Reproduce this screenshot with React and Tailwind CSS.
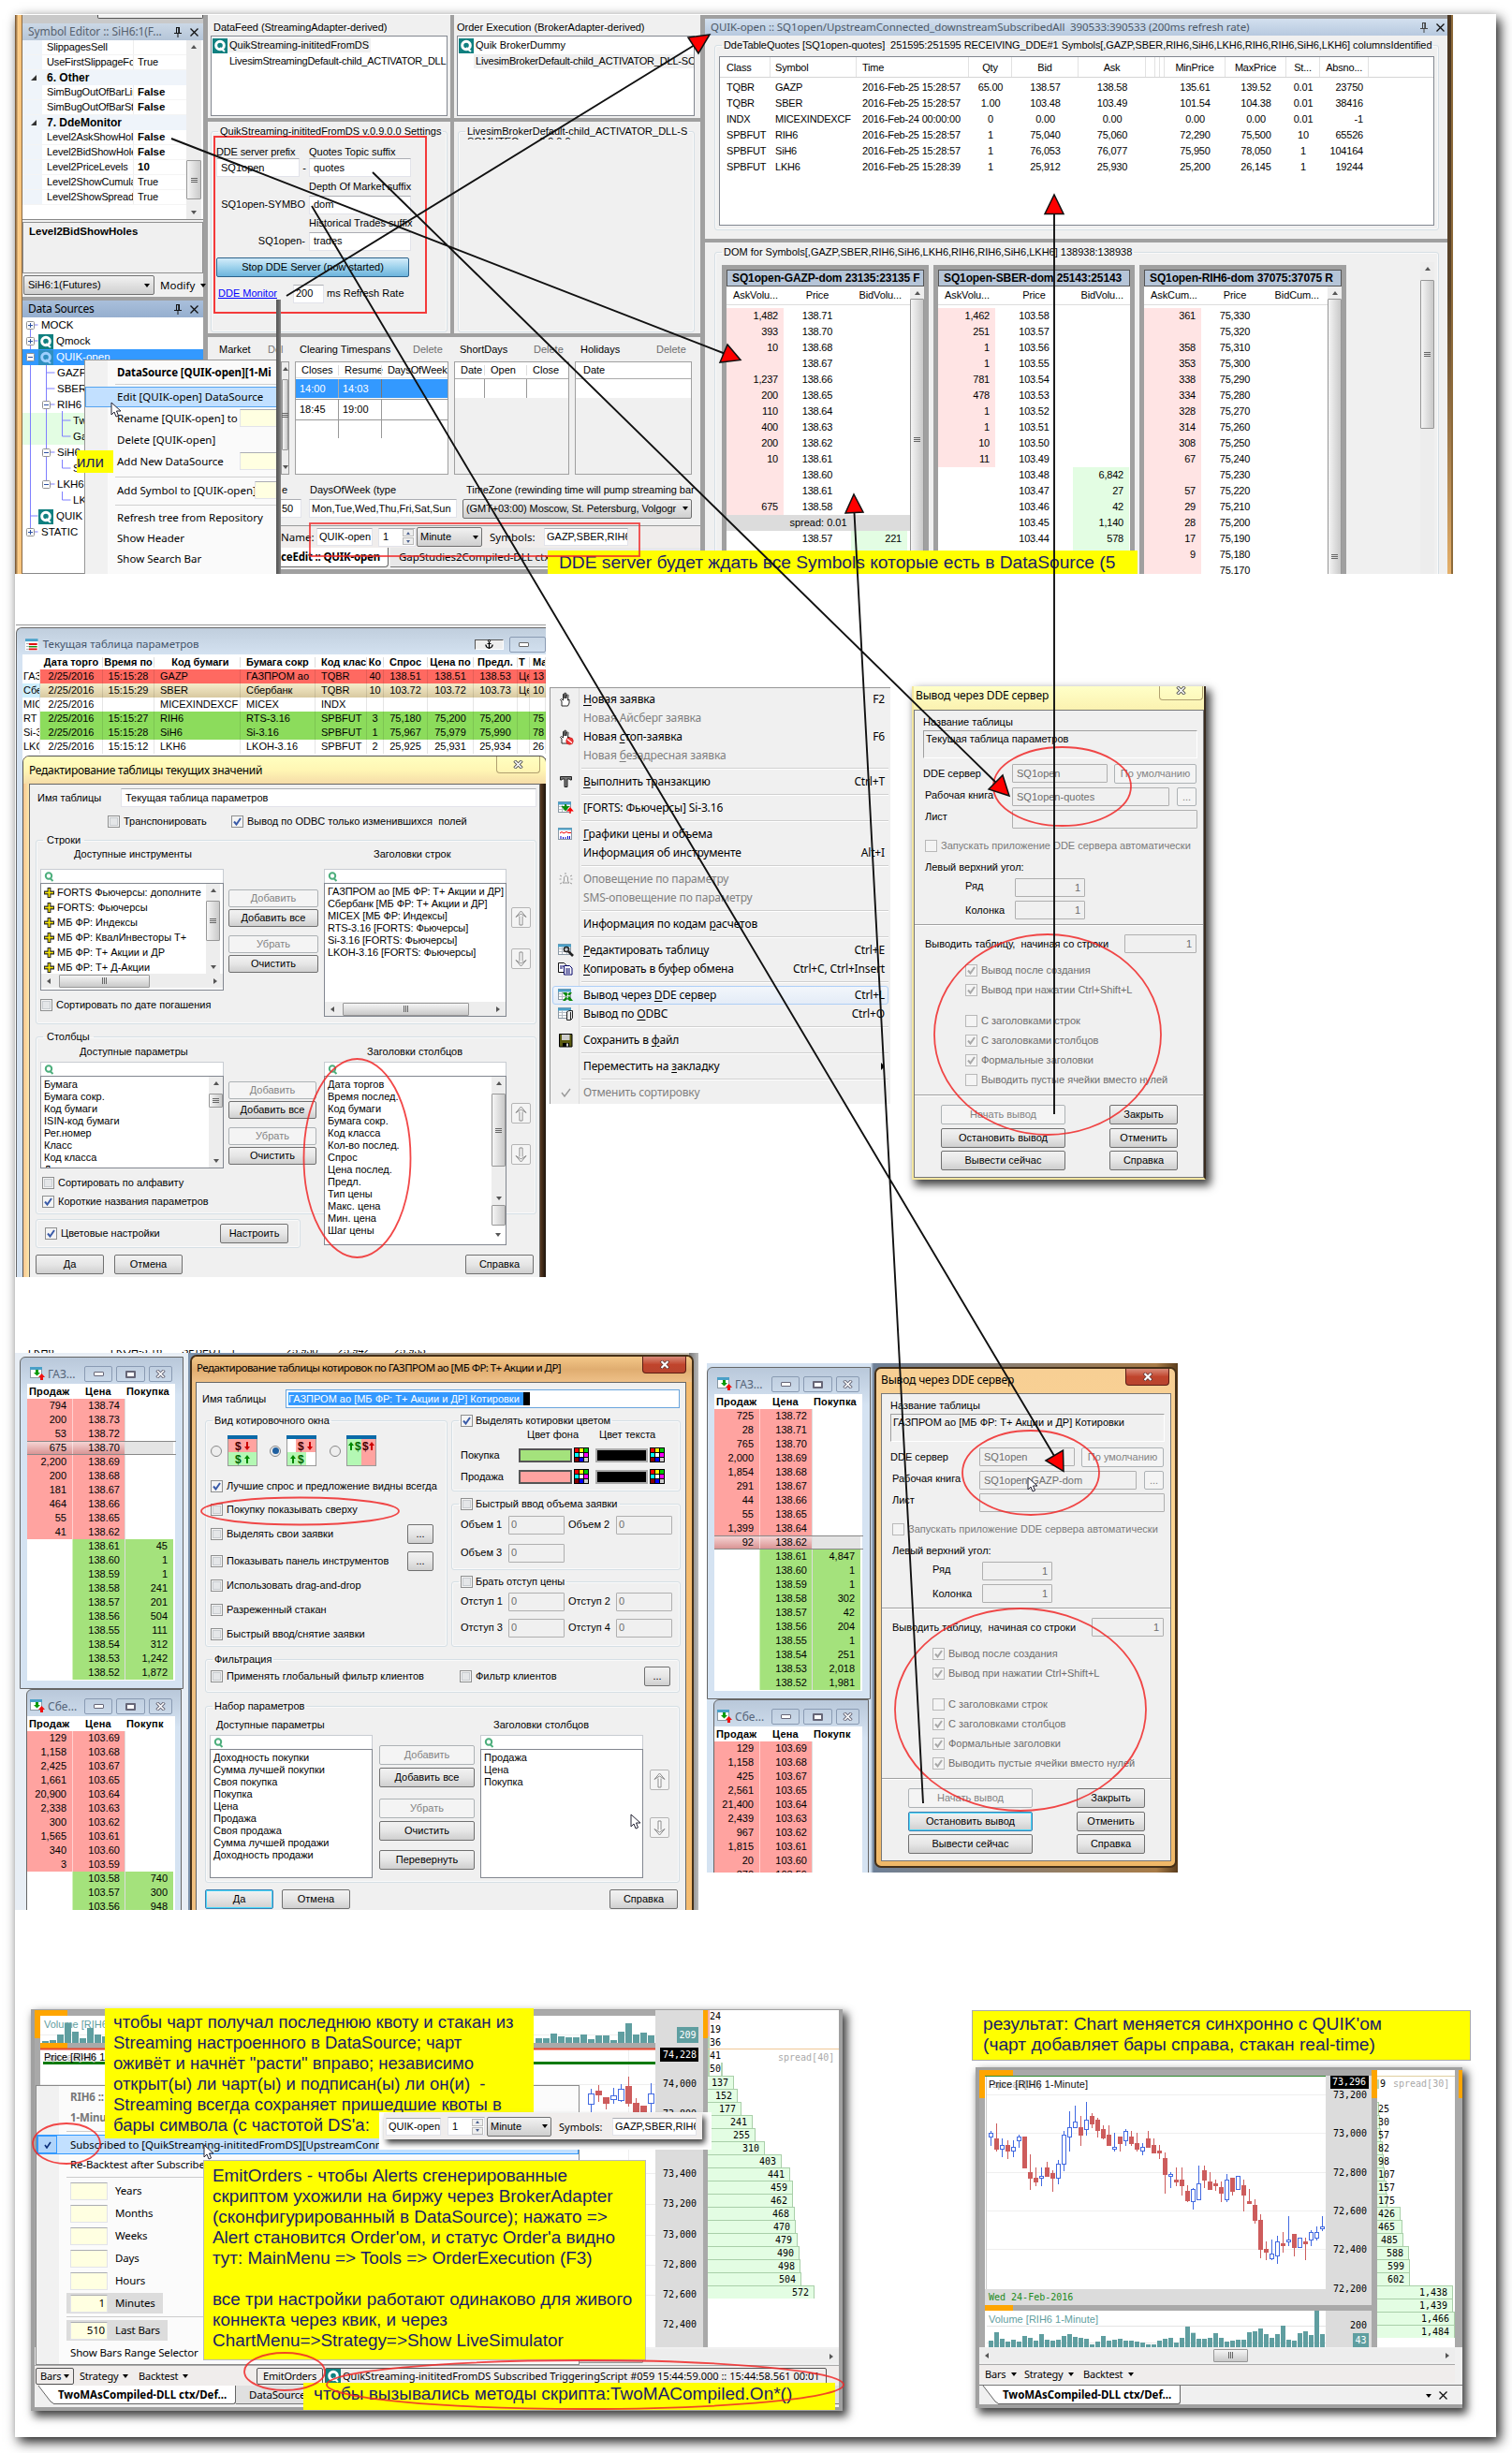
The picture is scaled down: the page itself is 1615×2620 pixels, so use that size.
import React from "react";

const SANS = "font-['Liberation_Sans',Arial,sans-serif]";
const UI = "font-['Noto_Sans','Open_Sans',sans-serif]";
const MONO = "font-['DejaVu_Sans_Mono','Liberation_Mono',monospace]";

/* ---------- small controls ---------- */

const Pin = ({ c = "#111" }) => (
  <svg width="8" height="11" viewBox="0 0 8 11" className="shrink-0">
    <path d="M2 0.5h4M2.5 0v6M5.5 0v6M4.8 0v6M0 6.5h8M4 7v4" stroke={c} fill="none" />
  </svg>
);
const Close = () => (
  <svg width="9" height="9" viewBox="0 0 9 9" className="shrink-0">
    <path d="M0.5 0.5l8 8M8.5 0.5l-8 8" stroke="#111" strokeWidth="1.3" fill="none" />
  </svg>
);
const Quik = ({ dim }) => (
  <svg width="16" height="16" viewBox="0 0 16 16" className="shrink-0">
    <rect width="16" height="16" fill={dim ? "#2f8fc0" : "#108080"} />
    <circle cx="8" cy="7.5" r="4.3" fill="none" stroke={dim ? "#9fd0ff" : "#fff"} strokeWidth="3" />
    <path d="M8 10l5 4" stroke={dim ? "#9fd0ff" : "#fff"} strokeWidth="2" />
  </svg>
);
const Cursor = () => (
  <svg width="12" height="18" viewBox="0 0 12 18">
    <path d="M1 1v13l3-3 2 5 2.5-1-2-5H11z" fill="#fff" stroke="#223" />
  </svg>
);
const Caret = ({ className = "" }) => (
  <span className={`inline-block size-0 shrink-0 border-x-[3.5px] border-t-[4px] border-x-transparent border-t-black ${className}`} />
);
const Cb = ({ on, dis, className = "" }) => (
  <span
    className={`flex size-[13px] shrink-0 items-center justify-center border bg-[#f4f4f4] ${dis ? "border-[#b8b8b8]" : "border-[#8e8f8f]"} ${className}`}
  >
    {!dis && !on && <span className="size-[9px] border border-[#c8ccd0] bg-[#e4e6e8]" />}
    {on ? (
      <svg width="9" height="9" viewBox="0 0 9 9">
        <path d="M1 4.5l2.5 3L8 1" fill="none" stroke={dis ? "#a8a8a8" : "#3a5ba8"} strokeWidth="2" />
      </svg>
    ) : null}
  </span>
);
const Btn = ({ className = "", dis, blue, children }) => (
  <span
    className={`flex shrink-0 items-center justify-center rounded-[2px] border ${
      dis
        ? "border-[#adb2b5] bg-[#f4f4f4] text-[#838383]"
        : blue
          ? "border-[#3c7fb1] bg-linear-to-b from-[#f2f2f2] via-[#e4e4e4] to-[#cfcfcf] shadow-[inset_0_0_0_1px_#46d8fb]"
          : "border-[#707070] bg-linear-to-b from-[#f2f2f2] via-[#e6e6e6] to-[#cfcfcf]"
    } ${className}`}
  >
    {children}
  </span>
);
const Inp = ({ className = "", dis, children }) => (
  <span
    className={`flex shrink-0 items-center overflow-hidden border px-1 ${
      dis ? "rounded-[1px] border-[#afafaf] bg-[#f0f0f0] text-[#6d6d6d]" : "border-[#e2e3ea] border-t-[#abadb3] bg-white"
    } ${className}`}
  >
    {children}
  </span>
);
const Combo = ({ className = "", children }) => (
  <span
    className={`flex shrink-0 items-center justify-between overflow-hidden rounded-[2px] border border-[#707070] bg-linear-to-b from-[#f2f2f2] to-[#cfcfcf] px-1 ${className}`}
  >
    {children}
    <Caret />
  </span>
);
const Group = ({ className = "", label, children }) => (
  <fieldset className={`min-w-0 rounded-[3px] border border-[#d5dfe5] shadow-[inset_0_0_0_1px_#fafafa] ${className}`}>
    {label && <legend className="ml-[7px] h-3 px-[2px] leading-3">{label}</legend>}
    {children}
  </fieldset>
);
const VScroll = ({ className = "", thumb = "mt-1 h-5" }) => (
  <span className={`flex shrink-0 flex-col items-center bg-[#ededed] ${className}`}>
    <span className="mt-[5px] size-0 shrink-0 border-x-[3px] border-b-[4px] border-x-transparent border-b-[#555]" />
    <span className={`flex w-full shrink-0 flex-col items-center justify-center gap-px rounded-[1px] border border-[#979797] bg-linear-to-r from-[#f5f5f5] to-[#c9c9c9] ${thumb}`}>
      <i className="block h-px w-[7px] bg-[#666]" />
      <i className="block h-px w-[7px] bg-[#666]" />
      <i className="block h-px w-[7px] bg-[#666]" />
    </span>
    <span className="mt-auto mb-[5px] size-0 shrink-0 border-x-[3px] border-t-[4px] border-x-transparent border-t-[#555]" />
  </span>
);
const HScroll = ({ className = "", thumb = "ml-2 w-20" }) => (
  <span className={`flex h-[15px] shrink-0 items-center bg-[#ededed] ${className}`}>
    <span className="ml-[6px] size-0 shrink-0 border-y-[3px] border-r-[4px] border-y-transparent border-r-[#555]" />
    <span className={`flex h-[14px] shrink-0 items-center justify-center gap-px rounded-[1px] border border-[#979797] bg-linear-to-b from-[#f5f5f5] to-[#c9c9c9] ${thumb}`}>
      <i className="block h-[7px] w-px bg-[#666]" />
      <i className="block h-[7px] w-px bg-[#666]" />
      <i className="block h-[7px] w-px bg-[#666]" />
    </span>
    <span className="mr-[6px] ml-auto size-0 shrink-0 border-y-[3px] border-l-[4px] border-y-transparent border-l-[#555]" />
  </span>
);
const Search = ({ className = "" }) => (
  <span className={`flex h-[15px] shrink-0 items-center border border-b-0 border-[#c8ccd2] bg-white pl-[3px] ${className}`}>
    <svg width="11" height="11" viewBox="0 0 11 11">
      <circle cx="5" cy="4.5" r="3.2" fill="none" stroke="#4cae7c" strokeWidth="2" />
      <path d="M6.5 7l3 3" stroke="#4cae7c" strokeWidth="2" />
    </svg>
  </span>
);
const ArrowBtn = ({ down, className = "" }) => (
  <span className={`flex h-[22px] w-[21px] shrink-0 items-center justify-center rounded-[2px] border border-[#b4b4b4] bg-[#f4f4f4] ${className}`}>
    <svg width="13" height="17" viewBox="0 0 13 17" className={down ? "rotate-180" : ""}>
      <path d="M5 6.500V16H8V6.500M1 7.500L6.500 1L12 7.500L6.500 4Z" fill="#fff" stroke="#8a8a8a" />
    </svg>
  </span>
);
const Spin = ({ className = "" }) => (
  <Inp className={`justify-between !pr-px ${className}`}>
    1
    <span className="flex flex-col gap-px">
      <i className="flex h-2 w-[12px] items-center justify-center border border-[#bbb] bg-[#eee]">
        <b className="size-0 border-x-[2.5px] border-b-[3px] border-x-transparent border-b-[#4a5f8f]" />
      </i>
      <i className="flex h-2 w-[12px] items-center justify-center border border-[#bbb] bg-[#eee]">
        <b className="size-0 border-x-[2.5px] border-t-[3px] border-x-transparent border-t-[#4a5f8f]" />
      </i>
    </span>
  </Inp>
);

/* ---------- top window ---------- */

const PROPS = [
  ["SlippagesSell", "", 0],
  ["UseFirstSlippageFor", "True", 0],
  ["6. Other", "", 2],
  ["SimBugOutOfBarLim", "False", 1],
  ["SimBugOutOfBarSto", "False", 1],
  ["7. DdeMonitor", "", 2],
  ["Level2AskShowHol", "False", 1],
  ["Level2BidShowHole", "False", 1],
  ["Level2PriceLevels", "10", 1],
  ["Level2ShowCumula", "True", 0],
  ["Level2ShowSpread", "True", 0],
];

const Exp = ({ minus, className = "" }) => (
  <svg width="9" height="9" viewBox="0 0 9 9" className={`shrink-0 ${className}`}>
    <rect x="0.5" y="0.5" width="8" height="8" rx="1" fill="#fff" stroke="#919191" />
    <path d={minus ? "M2 4.500h5" : "M2 4.500h5M4.500 2v5"} stroke="#2b4fa0" />
  </svg>
);

function SideColumn() {
  return (
    <div className="flex w-[193px] shrink-0 flex-col bg-[#f0f0f0]">
      <div className="flex h-[9px] justify-end bg-[#c9c9c9]">
        <span className="h-1 w-[113px] rounded-b-[2px] border border-t-0 border-[#555] bg-[#f0f0f0]" />
      </div>
      <div className={`flex h-[18px] items-center bg-linear-to-b from-[#cbd8e6] to-[#b5c5d8] pl-1.5 text-[12px] tracking-[-0.1px] text-[#56616e] ${UI}`}>
        <span className="w-[156px]">Symbol Editor :: SiH6:1(F...</span>
        <Pin />
        <span className="w-[9px]" />
        <Close />
      </div>
      <div className="flex h-[192px] border-b border-[#888] bg-white">
        <div className="w-[175px]">
          {PROPS.map(([k, v, t], i) =>
            t === 2 ? (
              <div key={i} className="flex h-4 items-center bg-[#eff4fa] text-[12px] font-bold">
                <span className="ml-[9px] w-[17px]">
                  <svg width="6" height="6" viewBox="0 0 6 6"><path d="M6 0v6H0z" fill="#333" /></svg>
                </span>
                {k}
              </div>
            ) : (
              <div key={i} className="flex h-4 items-stretch border-b border-[#f4f4f4]">
                <span className="w-[21px] shrink-0 bg-[#eff4fa]" />
                <span className="flex w-[97px] shrink-0 items-center overflow-hidden pl-[5px]"><span className="w-[92px] overflow-hidden tracking-[-0.15px]">{k}</span></span>
                <span className={`flex items-center border-l border-[#eee] pl-1 ${t === 1 ? "text-[11.5px] font-bold" : ""}`}>{v}</span>
              </div>
            )
          )}
        </div>
        <VScroll className="w-[16px]" thumb="mt-[119px] h-[42px]" />
      </div>
      <div className="mt-[2px] h-[55px] border border-[#909090] px-1.5 pt-1 text-[11.5px] font-bold">Level2BidShowHoles</div>
      <div className="flex h-[25px] items-center bg-[#f0f0f0] pl-px">
        <Combo className="h-[21px] w-[140px]">SiH6:1(Futures)</Combo>
        <span className={`ml-1.5 text-[11.5px] ${UI}`}>Modify</span>
        <Caret className="ml-1.5" />
      </div>
      <div className="h-1 bg-[#a0a0a0]" />
      <div className={`flex h-[18px] items-center bg-linear-to-b from-[#a9bfdb] to-[#96afcf] pl-1.5 text-[12px] tracking-[-0.3px] ${UI}`}>
        <span className="w-[156px]">Data Sources</span>
        <Pin />
        <span className="w-[9px]" />
        <Close />
      </div>
      <div className="relative flex-1 overflow-hidden border-b border-[#888] bg-white text-[11.5px] *:relative">
        <svg width="193" height="260" viewBox="0 0 193 260" className="!absolute top-0 left-0">
          <rect x="0" y="102" width="193" height="34" fill="#e3fde3" />
          <path d="M8.500 8v222M8.500 8h8M8.500 25h8M8.500 42h8M8.500 212h8M8.500 229h8M25.500 50v128M25.500 59h9M25.500 76h9M25.500 93h9M25.500 144h9M25.500 178h9M42.500 100v27h9M42.500 110h9M42.500 152v9h9M42.500 186v9h9" stroke="#7f7fff" fill="none" />
        </svg>
        <div className="flex h-[17px] items-center"><Exp className="ml-1 mr-[7px]" />MOCK</div>
        <div className="flex h-[17px] items-center"><Exp className="mr-1 ml-1" /><Quik /><span className="ml-[3px]">Qmock</span></div>
        <div className="flex h-[17px] items-center bg-[#3399ff] text-white"><Exp minus className="mr-1 ml-1" /><Quik dim /><span className="ml-[3px]">QUIK-open</span></div>
        <div className="flex h-[17px] items-center pl-[37px]">GAZP</div>
        <div className="flex h-[17px] items-center pl-[37px]">SBER</div>
        <div className="flex h-[17px] items-center pl-[21px]"><Exp minus className="mr-[7px]" />RIH6</div>
        <div className="flex h-[17px] items-center pl-[54px]">Tw</div>
        <div className="flex h-[17px] items-center pl-[54px]">Ga</div>
        <div className="flex h-[17px] items-center pl-[21px]"><Exp minus className="mr-[7px]" />SiH6</div>
        <div className="flex h-[17px] items-center pl-[54px]">S</div>
        <div className="flex h-[17px] items-center pl-[21px]"><Exp minus className="mr-[7px]" />LKH6</div>
        <div className="flex h-[17px] items-center pl-[54px]">LK</div>
        <div className="flex h-[17px] items-center pl-[17px]"><Quik /><span className="ml-[3px]">QUIK</span></div>
        <div className="flex h-[17px] items-center"><Exp className="ml-1 mr-[7px]" />STATIC</div>
      </div>
    </div>
  );
}

function Adapters() {
  return (
    <>
      <div className="flex h-[110px] gap-1">
        <div className="w-[259px] bg-[#f0f0f0] pl-[3px]">
          <div className="flex h-[22px] items-center pt-1 pl-[3px] tracking-[-0.05px]">DataFeed (StreamingAdapter-derived)</div>
          <div className="h-[86px] w-[253px] overflow-hidden border border-[#828790] bg-white pt-px">
            <div className="flex h-[17px] items-center pl-px"><Quik /><span className="flex h-[15px] items-center bg-[#f0f0f0] px-[2px]">QuikStreaming-inititedFromDS</span></div>
            <div className="flex h-[17px] items-center pl-[19px] tracking-[-0.25px]">LivesimStreamingDefault-child_ACTIVATOR_DLL</div>
          </div>
        </div>
        <div className="w-[263px] bg-[#f0f0f0] pl-[3px]">
          <div className="flex h-[22px] items-center pt-1">Order Execution (BrokerAdapter-derived)</div>
          <div className="h-[86px] w-[254px] overflow-hidden border border-[#828790] bg-white pt-px">
            <div className="flex h-[17px] items-center pl-px"><Quik /><span className="pl-[2px]">Quik BrokerDummy</span></div>
            <div className="flex h-[17px] items-center pl-[17px]"><span className="flex h-[15px] items-center bg-[#f0f0f0] px-[2px] tracking-[-0.2px]">LivesimBrokerDefault-child_ACTIVATOR_DLL-SC</span></div>
          </div>
        </div>
      </div>
      <div className="mt-1 flex h-[226px] gap-1">
        <div className="w-[259px] bg-[#f0f0f0] pt-1 pl-[3px]">
          <Group className="h-[221px] w-[253px]" label="QuikStreaming-inititedFromDS v.0.9.0.0 Settings">
            <div className="-mt-px ml-[2px] h-[190px] w-[228px] border-2 border-[#f43a3a] pl-[1px]">
              <div className="flex h-[26px] items-center pt-1"><span className="w-[99px] tracking-[-0.15px]">DDE server prefix</span><span>Quotes Topic suffix</span></div>
              <div className="-mt-[4px] flex h-[20px] items-center"><Inp className="h-[20px] w-[89px]">SQ1open</Inp><span className="w-[10px] text-center">-</span><Inp className="h-[20px] w-[109px]">quotes</Inp></div>
              <div className="flex h-[20px] items-center pl-[99px]">Depth Of Market suffix</div>
              <div className="flex h-[19px] items-center"><span className="w-[99px] pr-1 text-right">SQ1open-SYMBO</span><Inp className="h-[20px] w-[109px]">dom</Inp></div>
              <div className="flex h-[20px] items-center pl-[99px]">Historical Trades suffix</div>
              <div className="flex h-[19px] items-center"><span className="w-[99px] pr-1 text-right">SQ1open-</span><Inp className="h-[20px] w-[109px]">trades</Inp></div>
              <div className="mt-[8px] flex h-[21px] w-[206px] items-center justify-center rounded-[2px] border border-[#2c628b] bg-linear-to-b from-[#d3ecfa] via-[#9dd2ec] to-[#6cb4dc]">Stop DDE Server (now started)</div>
              <div className="mt-[7px] flex h-[21px] items-center"><span className="w-[82px] pl-[2px] text-[#0000ff] underline">DDE Monitor</span><Inp className="mr-[3px] h-[20px] w-[33px] !px-[2px]">200</Inp>ms Refresh Rate</div>
            </div>
          </Group>
        </div>
        <div className="w-[263px] bg-[#f0f0f0] pt-1 pl-1">
          <Group className="h-[221px] w-[253px]" label="LivesimBrokerDefault-child_ACTIVATOR_DLL-S">
            <div className="-mt-px ml-[9px] h-1 overflow-hidden leading-3">SQMUTEC - ..  0.9.0.0</div>
          </Group>
        </div>
      </div>
    </>
  );
}

function Calendars() {
  return (
    <div className="mt-1 flex h-[248px] flex-col overflow-hidden bg-[#f0f0f0]">
      <div className="flex h-[26px] items-center pl-[12px]">
        <span className="w-[52px]">Market</span><span className="w-[34px] text-[#777]">Del</span>
        <span className="w-[121px]">Clearing Timespans</span><span className="w-[50px] text-[#6d6d6d]">Delete</span>
        <span className="w-[79px]">ShortDays</span><span className="w-[50px] text-[#6d6d6d]">Delete</span>
        <span className="w-[81px]">Holidays</span><span className="text-[#6d6d6d]">Delete</span>
      </div>
      <div className="flex h-[121px] pl-[78px]">
        <VScroll className="w-[9px] border border-[#999]" thumb="mt-[9px] h-[76px]" />
        <div className="ml-[6px] flex w-[164px] flex-col border border-[#a0a0a0] bg-white">
          <div className="flex h-[17px] items-center border-b border-[#ddd]"><span className="w-[45px] pl-1.5">Closes</span><span className="w-[46px] border-l border-[#ddd] pl-1.5">Resume</span><span className="border-l border-[#ddd] pl-1.5 tracking-[-0.1px]">DaysOfWeek</span></div>
          <div className="mt-px flex h-[20px] items-center gap-px bg-[#3399ff] text-white"><span className="w-[44px] pl-[4px]">14:00</span><span className="flex h-full w-[45px] items-center border-l border-[#aaa] pl-[4px]">14:03</span><span className="h-full border-l border-[#777]" /></div>
          <div className="mt-px flex h-[22px] items-center gap-px border-t border-[#999]"><span className="w-[44px] pl-[4px]">18:45</span><span className="flex h-full w-[45px] items-center border-l border-[#999] pl-[4px]">19:00</span><span className="h-full border-l border-[#999]" /></div>
          <div className="flex h-[20px] items-center gap-px border-t border-[#999]"><span className="w-[44px]" /><span className="h-full w-[45px] border-l border-[#999]" /><span className="h-full border-l border-[#999]" /></div>
        </div>
        <div className="ml-[6px] w-[123px] border border-[#a0a0a0]">
          <div className="flex h-[17px] items-center bg-white"><span className="w-[31px] pl-1.5">Date</span><span className="w-[45px] border-l border-[#ddd] pl-1.5">Open</span><span className="border-l border-[#ddd] pl-1.5">Close</span></div>
          <div className="flex h-[21px] border-t border-[#aaa] bg-white"><span className="w-[31px]" /><span className="w-[45px] border-l border-[#999]" /><span className="border-l border-[#999]" /></div>
        </div>
        <div className="ml-[6px] w-[125px] border border-[#a0a0a0]">
          <div className="flex h-[17px] items-center bg-white pl-2">Date</div>
          <div className="h-[21px] border-t border-[#aaa] bg-white" />
        </div>
      </div>
      <div className="mt-[7px] flex h-[18px] items-center pl-[79px]"><span className="w-[30px]">e</span><span className="w-[167px]">DaysOfWeek (type</span><span className="tracking-[-0.05px]">TimeZone (rewinding time will pump streaming bar</span></div>
      <div className="flex h-[22px] items-center pl-[74px]"><Inp className="h-[20px] w-[26px]">50</Inp><Inp className="ml-2 h-[20px] w-[158px] !px-[2px]">Mon,Tue,Wed,Thu,Fri,Sat,Sun</Inp><Combo className="ml-[6px] h-[21px] w-[245px] !px-[3px]"><span className="tracking-[-0.1px]">(GMT+03:00) Moscow, St. Petersburg, Volgogr</span></Combo></div>
      <div className="mt-[7px] flex h-[24px] items-center border-t border-[#999] bg-[#f0edec] pl-[78px]">
        <span className={`w-[38px] text-[11.5px] ${UI}`}>Name:</span>
        <Inp className="h-[19px] w-[60px] !px-[2px]">QUIK-open</Inp>
        <Spin className="ml-[6px] h-[20px] w-[40px]" />
        <Combo className="ml-[1px] h-[21px] w-[70px] !px-[3px]">Minute</Combo>
        <span className={`ml-2 w-[58px] text-[11.5px] ${UI}`}>Symbols:</span>
        <Inp className="h-[19px] w-[90px] !px-[2px]">GAZP,SBER,RIH6</Inp>
      </div>
      <div className={`flex h-[23px] items-start text-[11.5px] ${UI}`}>
        <div className="ml-[78px] flex h-[21px] w-[115px] items-center rounded-br-[4px] border-r border-b border-[#666] bg-white font-bold"><span className="w-[115px] tracking-[-0.2px]">ceEdit :: QUIK-open</span></div>
        <div className="ml-[2px] flex h-[21px] flex-1 items-center border-b border-[#777] bg-[#e8e8e8] pl-[9px] tracking-[-0.05px]">GapStudies2Compiled-DLL ctx</div>
      </div>
    </div>
  );
}

const QCOLS = [
  "w-[54px] pl-[7px]", "w-[92px] pl-[5px]", "w-[120px] pl-[6px]", "w-[46px] text-center", "w-[71px] text-center", "w-[72px] text-center",
  "w-[10px]", "w-[5px]", "w-[5px]", "w-[65px] text-center", "w-[65px] text-center", "w-[36px] text-center", "w-[52px] pr-[6px] text-right",
];
const QROWS = [
  ["TQBR", "GAZP", "2016-Feb-25 15:28:57", "65.00", "138.57", "138.58", "", "", "", "135.61", "139.52", "0.01", "23750"],
  ["TQBR", "SBER", "2016-Feb-25 15:28:57", "1.00", "103.48", "103.49", "", "", "", "101.54", "104.38", "0.01", "38416"],
  ["INDX", "MICEXINDEXCF", "2016-Feb-24 00:00:00", "0", "0.00", "0.00", "", "", "", "0.00", "0.00", "0.01", "-1"],
  ["SPBFUT", "RIH6", "2016-Feb-25 15:28:57", "1", "75,040", "75,060", "", "", "", "72,290", "75,500", "10", "65526"],
  ["SPBFUT", "SiH6", "2016-Feb-25 15:28:57", "1", "76,053", "76,077", "", "", "", "75,950", "78,050", "1", "104164"],
  ["SPBFUT", "LKH6", "2016-Feb-25 15:28:39", "1", "25,912", "25,930", "", "", "", "25,200", "26,145", "1", "19244"],
];
const D1 = [["1,482", "138.71"], ["393", "138.70"], ["10", "138.68"], ["", "138.67"], ["1,237", "138.66"], ["200", "138.65"], ["110", "138.64"], ["400", "138.63"], ["200", "138.62"], ["10", "138.61"], ["", "138.60"], ["", "138.61"], ["675", "138.58"], null, ["", "138.57", "221"], ["", "", " "]];
const D2 = [["1,462", "103.58"], ["251", "103.57"], ["1", "103.56"], ["1", "103.55"], ["781", "103.54"], ["478", "103.53"], ["1", "103.52"], ["1", "103.51"], ["10", "103.50"], ["11", "103.49"], ["", "103.48", "6,842"], ["", "103.47", "27"], ["", "103.46", "42"], ["", "103.45", "1,140"], ["", "103.44", "578"], ["", "", " "]];
const D3 = [["361", "75,330"], ["", "75,320"], ["358", "75,310"], ["353", "75,300"], ["338", "75,290"], ["334", "75,280"], ["328", "75,270"], ["314", "75,260"], ["308", "75,250"], ["67", "75,240"], ["", "75,230"], ["57", "75,220"], ["29", "75,210"], ["28", "75,200"], ["17", "75,190"], ["9", "75,180"], ["", "75,170"]];

function Dom({ title, rows, heads, price, bid, scroll, className }) {
  return (
    <div className={`shrink-0 border-[5px] border-b-0 border-[#a0a0a0] bg-white ${className}`}>
      <div className="flex h-[18px] items-center overflow-hidden border border-[#555] bg-[#b6c5d8] pl-[5px] text-[12px] font-bold tracking-[-0.12px]">{title}</div>
      <div className="flex h-[400px]">
        <div className="flex-1">
          <div className="mb-[3px] flex h-[20px] items-center border-b border-[#ddd] tracking-[-0.1px]">
            <span className="w-[61px] pl-[7px]">{heads[0]}</span><span className={`text-center ${price}`}>Price</span><span className={`text-right ${bid}`}>{heads[1]}</span>
          </div>
          {rows.map((r, i) =>
            r === null ? (
              <div key={i} className="flex h-[17px] items-center justify-center bg-[#dcdcdc]">spread: 0.01</div>
            ) : (
              <div key={i} className="flex h-[17px] items-stretch tracking-[-0.2px]">
                <span className={`flex w-[61px] items-center justify-end pr-[6px] ${r[2] ? "" : "bg-[#ffe4e4]"}`}>{r[0]}</span>
                <span className={`flex items-center justify-center ${price}`}>{r[1]}</span>
                <span className={`flex items-center justify-end ${bid} ${r[2] ? "bg-[#e3fde3]" : ""}`}>{r[2]}</span>
              </div>
            )
          )}
        </div>
        {scroll && <VScroll className="w-[15px]" thumb={scroll} />}
      </div>
    </div>
  );
}

function MonitorColumn() {
  return (
    <div className="w-[793px] shrink-0 bg-[#f0f0f0]">
      <div className="h-1 bg-[#a0a0a0]" />
      <div className={`flex h-[18px] items-center bg-linear-to-b from-[#d3e0ef] to-[#b7c9df] pl-[6px] text-[11.5px] text-[#4c5866] ${UI}`}>
        <span className="w-[758px] tracking-[-0.08px]">QUIK-open :: SQ1open/UpstreamConnected_downstreamSubscribedAll  390533:390533 (200ms refresh rate)</span>
        <Pin c="#444" />
        <span className="w-[9px]" />
        <Close />
      </div>
      <div className="h-[217px] px-[10px] pt-[4px]">
        <Group className="h-[204px] w-[774px]" label={<span className="tracking-[-0.07px]">DdeTableQuotes [SQ1open-quotes]  251595:251595 RECEIVING_DDE#1 Symbols[,GAZP,SBER,RIH6,SiH6,LKH6,RIH6,RIH6,SiH6,LKH6] columnsIdentified</span>}>
          <div className="mt-[6px] ml-[4px] h-[181px] w-[764px] border border-[#828790] bg-white tracking-[-0.2px]">
            <div className="mb-[2px] flex h-[22px] items-stretch border-b border-[#d5d5d5] leading-[22px]">
              {["Class", "Symbol", "Time", "Qty", "Bid", "Ask", "", "", "", "MinPrice", "MaxPrice", "St...", "Absno..."].map((h, i) => (
                <span key={i} className={`border-r border-[#e2e2e2] ${QCOLS[i]}`}>{h}</span>
              ))}
            </div>
            {QROWS.map((r, j) => (
              <div key={j} className="flex h-[17px] items-center">
                {r.map((c, i) => (<span key={i} className={QCOLS[i]}>{c}</span>))}
              </div>
            ))}
          </div>
        </Group>
      </div>
      <div className="h-1 bg-[#a0a0a0]" />
      <div className="h-[354px] overflow-hidden px-[10px] pt-[4px]">
        <Group className="h-[400px] w-[774px]" label="DOM for Symbols[,GAZP,SBER,RIH6,SiH6,LKH6,RIH6,RIH6,SiH6,LKH6] 138938:138938">
          <div className="mt-[8px] flex items-start pl-[7px]">
            <Dom className="w-[221px]" title="SQ1open-GAZP-dom 23135:23135 F" rows={D1} heads={["AskVolu...", "BidVolu..."]} price="w-[72px]" bid="w-[60px] pr-[6px]" scroll="mt-[4px] h-[300px]" />
            <Dom className="ml-[5px] w-[215px]" title="SQ1open-SBER-dom 25143:25143" rows={D2} heads={["AskVolu...", "BidVolu..."]} price="w-[83px]" bid="w-[60px] pr-[6px]" />
            <Dom className="ml-[5px] w-[221px]" title="SQ1open-RIH6-dom 37075:37075 R" rows={D3} heads={["AskCum...", "BidCum..."]} price="w-[72px]" bid="w-[60px] pr-[6px]" scroll="mt-[4px] h-[550px]" />
            <VScroll className="-mt-[3px] ml-[79px] h-[400px] w-[15px]" thumb="mt-[10px] h-[159px]" />
          </div>
        </Group>
      </div>
    </div>
  );
}

const MenuSep = () => <div className="ml-[32px] h-px bg-[#d0d0d0]" />;

function TopWindow() {
  return (
    <>
      <div className={`absolute top-4 left-4 flex h-[597px] w-[1536px] overflow-hidden bg-[#a0a0a0] ${SANS}`}>
        <div className="w-2 shrink-0 border-r border-[#8a6a45] bg-linear-to-r from-[#6b4c2c] via-[#ffcf8a] to-[#f3bf78]" />
        <SideColumn />
        <div className="ml-[5px] w-[526px] shrink-0">
          <Adapters />
          <Calendars />
        </div>
        <div className="w-[5px] shrink-0" />
        <MonitorColumn />
        <div className="flex-1 border-r-2 border-[#8d6a3a] bg-linear-to-b from-[#4a3622] via-[#5b4429] to-[#e6b06a]" />
      </div>
      {/* popup of the data source tree */}
      <div className={`absolute top-[384px] left-[90px] h-[229px] w-[206px] overflow-hidden border-t border-l border-[#979797] bg-[linear-gradient(90deg,#f1f1f1_24px,#fafafa_24px)] text-[11.5px] ${UI}`}>
        <div className="flex h-[25px] items-center pl-[34px] font-bold tracking-[-0.1px]">DataSource [QUIK-open][1-Mi</div>
        <MenuSep />
        <div className="mt-[2px] flex h-[22px] items-center border border-[#55a4f0] bg-[#c2e0ff] pl-[33px]">Edit [QUIK-open] DataSource</div>
        <div className="flex h-[23px] items-center pl-[34px]"><span className="w-[147px]">Rename [QUIK-open] to</span><Inp className="h-[19px] w-[40px] !bg-[#ffffe1]" /></div>
        <div className="flex h-[23px] items-center pl-[34px]">Delete [QUIK-open]</div>
        <div className="flex h-[23px] items-center pl-[34px]"><span className="w-[147px]">Add New DataSource</span><Inp className="h-[19px] w-[40px] !bg-[#ffffe1]" /></div>
        <div className="mt-[5px]"><MenuSep /></div>
        <div className="mt-[2px] flex h-[23px] items-center pl-[34px]"><span className="w-[147px]">Add Symbol to [QUIK-open]</span><Inp className="h-[19px] w-[40px] !bg-[#ffffe1]" /></div>
        <div className="mt-[4px]"><MenuSep /></div>
        <div className="mt-[2px] flex h-[22px] items-center pl-[34px]">Refresh tree from Repository</div>
        <div className="flex h-[22px] items-center pl-[34px]">Show Header</div>
        <div className="flex h-[22px] items-center pl-[34px]">Show Search Bar</div>
      </div>
      <div className="absolute top-[320px] left-[295px] h-[293px] w-[5px] bg-linear-to-r from-[#555] via-[#666] to-[#888]" />
      <div className="absolute top-[429px] left-[118px]"><Cursor /></div>
      <div className={`absolute top-[481px] left-[82px] flex h-[24px] w-[39px] items-center bg-[#ffff00] text-[17px] text-[#1c1c60] ${SANS}`}>или</div>
      <div className={`absolute top-[588px] left-[585px] flex h-[25px] w-[630px] items-center overflow-hidden bg-[#ffff00] pl-[12px] text-[19.2px] text-[#1a1a6a] ${SANS}`}>DDE server будет ждать все Symbols которые есть в DataSource (5</div>
    </>
  );
}

/* ---------- parameters table and its editor ---------- */

const PC = [
  "w-[19px] pl-px", "w-[67px] text-center", "w-[55px] text-center", "w-[92px] pl-[6px]", "w-[80px] pl-[6px]", "w-[55px] pl-[6px]", "w-[18px] text-center",
  "w-[47px] text-center", "w-[49px] text-center", "w-[47px] text-center", "w-[13px] pl-px", "w-[17px] pl-[3px]",
];
const PH = ["", "Дата торго", "Время по", "    Код бумаги", "Бумага сокр", "Код клас", "Ко", "Спрос", "Цена по", "Предл.", "Т", "Ма"];
const PR = [
  ["bg-[#ff6961]", "ГАЗ", "2/25/2016", "15:15:28", "GAZP", "ГАЗПРОМ ао", "TQBR", "40", "138.51", "138.51", "138.53", "Це", "13"],
  ["bg-linear-to-b from-[#f5ecca] to-[#d8c9a0]", "Сбе", "2/25/2016", "15:15:29", "SBER", "Сбербанк", "TQBR", "10", "103.72", "103.72", "103.73", "Це", "10"],
  ["bg-white", "MIC", "2/25/2016", "", "MICEXINDEXCF", "MICEX", "INDX", "", "", "", "", "", ""],
  ["bg-[#8cdc5c]", "RT", "2/25/2016", "15:15:27", "RIH6", "RTS-3.16", "SPBFUT", "3", "75,180", "75,200", "75,200", "", "75"],
  ["bg-[#8cdc5c]", "Si-3", "2/25/2016", "15:15:28", "SiH6", "Si-3.16", "SPBFUT", "1", "75,967", "75,979", "75,990", "", "78"],
  ["bg-white", "LKO", "2/25/2016", "15:15:12", "LKH6", "LKOH-3.16", "SPBFUT", "2", "25,925", "25,931", "25,934", "", "26"],
];
const Plus = () => (
  <svg width="11" height="11" viewBox="0 0 12 12" className="mr-[3px] shrink-0">
    <path d="M4.500 0.500h3v4h4v3h-4v4h-3v-4h-4v-3h4z" fill="#f7e600" stroke="#222" strokeWidth="1.100" />
  </svg>
);

function ParamsEditor() {
  return (
    <div className={`absolute isolate top-[667px] left-[17px] h-[697px] w-[566px] overflow-hidden border-t border-[#999] bg-white ${SANS}`}>
      <div className="mt-[2px] h-[800px] rounded-tl-[6px] border-t border-l border-[#666] bg-linear-to-b from-[#c0cedd] to-[#d5e3f2] to-[30px]">
        <div className={`flex h-[28px] items-center pt-[6px] pl-[9px] text-[11.5px] text-[#45556b] ${UI}`}>
          <svg width="14" height="13" viewBox="0 0 14 13" className="mr-[5px]"><rect width="14" height="13" fill="#fff" /><rect width="14" height="3" fill="#4aa0c8" /><path d="M1 5.500h3M1 8.500h3M1 11.500h3" stroke="#aaa" /><path d="M4 5h9v2H4zM4 10.500h9v2H4z" fill="#e01010" /><path d="M4 8h9v1.500H4z" fill="#109010" /></svg>
          <span className="w-[474px]">Текущая таблица параметров</span>
          <span className="flex h-[11px] w-[31px] items-center justify-center border border-r-white border-b-white border-[#555] bg-[#eee]">
            <svg width="9" height="10" viewBox="0 0 9 10"><circle cx="4.500" cy="1.500" r="1.100" fill="none" stroke="#000" /><path d="M4.500 2.500v7M2.500 4.500h4M0.800 5.500c0.300 2.500 2 3.500 3.700 3.800c1.700-0.300 3.400-1.300 3.700-3.800" fill="none" stroke="#000" strokeWidth="1.200" /></svg>
          </span>
          <span className="ml-[6px] flex h-[17px] w-[40px] items-center rounded-[2px] border border-[#8a9bb3] pl-[9px]"><i className="h-[5px] w-[11px] rounded-[1px] border border-[#666] bg-white" /></span>
        </div>
        <div className="ml-[6px] bg-white text-[11px]">
          <div className="flex h-[16px] items-center font-bold">
            {PH.map((h, i) => (<span key={i} className={`shrink-0 overflow-hidden border-r border-[#ddd] ${PC[i]}`}>{h}</span>))}
          </div>
          {PR.map(([bg, ...r], j) => (
            <div key={j} className="flex h-[15px]">
              {r.map((c, i) => (
                <span key={i} className={`flex h-[15px] shrink-0 items-center overflow-hidden border-r border-black/10 ${PC[i].includes("center") ? "justify-center" : ""} ${PC[i]} ${i ? bg : j === 1 ? "bg-[#cdeefc]" : "bg-white"}`}>{c}</span>
              ))}
            </div>
          ))}
          <div className="h-5" />
        </div>
      </div>

      <div className="absolute top-[139px] left-[7px] h-[570px] w-[560px] rounded-t-[7px] border border-[#555] bg-[linear-gradient(90deg,#f6c590,#fff4b8_8px,#fff4b8_60%,#5a3a20_552px,#1c140c)]">
        <div className={`flex h-[29px] justify-between rounded-t-[6px] bg-linear-to-b from-[#ffffc0] via-[#fff6b4] to-[#f5dca8] pl-[6px] text-[12px] ${UI}`}>
          <span className="flex items-center tracking-[-0.3px]">Редактирование таблицы текущих значений</span>
          <span className="mr-[6px] flex h-[18px] w-[47px] items-center justify-center rounded-b-[4px] border border-t-0 border-[#b0a070]">
            <svg width="11" height="9" viewBox="0 0 11 9"><path d="M1.500 0.500l8 8M9.500 0.500l-8 8" stroke="#555" strokeWidth="3.400" /><path d="M2 1l7 7M9 1l-7 7" stroke="#fff" strokeWidth="1.600" /></svg>
          </span>
        </div>
        <div className="ml-[6px] h-[540px] w-[546px] border border-[#666] bg-[#f0f0f0]">
          <div className="mt-[4px] flex h-[20px] items-center pl-[8px]"><span className="w-[89px]">Имя таблицы</span><Inp className="h-[20px] w-[444px]">Текущая таблица параметров</Inp></div>
          <div className="mt-[5px] flex h-[20px] items-center pl-[83px]"><Cb /><span className="w-[119px] pl-1">Транспонировать</span><Cb on /><span className="pl-1">Вывод по ODBC только изменившихся  полей</span></div>
          <Group className="mt-[4px] ml-[6px] h-[203px] w-[535px]" label={<span className="px-[2px]">Строки</span>}>
            <div className="flex h-[18px] items-center pl-[40px]"><span className="w-[320px]">Доступные инструменты</span>Заголовки строк</div>
            <div className="mt-[7px] flex pl-[4px]">
              <div className="w-[196px]">
                <Search />
                <div className="h-[115px] border border-[#828790] bg-white">
                  <div className="flex h-[96px]">
                    <div className="w-[176px] overflow-hidden pl-[3px]">
                      {["FORTS Фьючерсы: дополните", "FORTS: Фьючерсы", "МБ ФР: Индексы", "МБ ФР: КвалИнвесторы Т+", "МБ ФР: Т+ Акции и ДР", "МБ ФР: Т+ Д-Акции"].map((t) => (
                        <div key={t} className="flex h-4 items-center pt-[2px]"><Plus />{t}</div>
                      ))}
                    </div>
                    <VScroll className="w-[15px]" thumb="mt-[9px] h-[43px]" />
                  </div>
                  <HScroll thumb="ml-[9px] w-[97px]" />
                </div>
                <div className="mt-[9px] flex items-center"><Cb /><span className="pl-[4px]">Сортировать по дате погашения</span></div>
              </div>
              <div className="w-[107px] pt-[22px] pl-[5px]">
                <Btn dis className="h-[19px] w-[96px]">Добавить</Btn>
                <Btn className="mt-[2px] h-[19px] w-[96px]">Добавить все</Btn>
                <Btn dis className="mt-[9px] h-[19px] w-[96px]">Убрать</Btn>
                <Btn className="mt-[2px] h-[19px] w-[96px]">Очистить</Btn>
              </div>
              <div className="w-[195px]">
                <Search />
                <div className="flex h-[143px] flex-col justify-between border border-[#828790] bg-white">
                  <div className="overflow-hidden pt-[2px] pl-[3px] leading-[13px]">
                    {["ГАЗПРОМ ао [МБ ФР: Т+ Акции и ДР]", "Сбербанк [МБ ФР: Т+ Акции и ДР]", "MICEX [МБ ФР: Индексы]", "RTS-3.16 [FORTS: Фьючерсы]", "Si-3.16 [FORTS: Фьючерсы]", "LKOH-3.16 [FORTS: Фьючерсы]"].map((t) => <div key={t} className="tracking-[-0.1px]">{t}</div>)}
                  </div>
                  <HScroll thumb="ml-[9px] w-[135px]" />
                </div>
              </div>
              <div className="pt-[41px] pl-[5px]"><ArrowBtn /><ArrowBtn down className="mt-[22px]" /></div>
            </div>
          </Group>
          <Group className="mt-[7px] ml-[6px] h-[196px] w-[535px]" label={<span className="px-[2px]">Столбцы</span>}>
            <div className="flex h-[21px] items-center pl-[46px]"><span className="w-[307px]">Доступные параметры</span>Заголовки столбцов</div>
            <div className="flex pl-[4px]">
              <div className="w-[196px]">
                <Search />
                <div className="flex h-[99px] justify-between border border-[#828790] bg-white">
                  <div className="overflow-hidden pt-[2px] pl-[3px] leading-[13px]">
                    {["Бумага", "Бумага сокр.", "Код бумаги", "ISIN-код бумаги", "Рег.номер", "Класс", "Код класса", "Доходность"].map((t) => <div key={t}>{t}</div>)}
                  </div>
                  <VScroll className="w-[15px]" thumb="mt-[9px] h-[15px]" />
                </div>
                <div className="mt-[9px] ml-[2px] flex items-center"><Cb /><span className="pl-[4px]">Сортировать по алфавиту</span></div>
                <div className="mt-[7px] ml-[2px] flex items-center"><Cb on /><span className="pl-[4px]">Короткие названия параметров</span></div>
              </div>
              <div className="w-[107px] pt-[21px] pl-[5px]">
                <Btn dis className="h-[19px] w-[94px]">Добавить</Btn>
                <Btn className="mt-[2px] h-[19px] w-[94px]">Добавить все</Btn>
                <Btn dis className="mt-[9px] h-[19px] w-[94px]">Убрать</Btn>
                <Btn className="mt-[2px] h-[19px] w-[94px]">Очистить</Btn>
              </div>
              <div className="relative z-10 w-[195px]">
                <Search />
                <div className="flex h-[181px] justify-between border border-[#828790] bg-white">
                  <div className="pt-[2px] pl-[3px] leading-[13px]">
                    {["Дата торгов", "Время послед.", "Код бумаги", "Бумага сокр.", "Код класса", "Кол-во послед.", "Спрос", "Цена послед.", "Предл.", "Тип цены", "Макс. цена", "Мин. цена", "Шаг цены"].map((t) => <div key={t}>{t}</div>)}
                  </div>
                  <div className="flex flex-col">
                    <VScroll className="h-[137px] w-[15px]" thumb="mt-[9px] h-[78px]" />
                    <span className="h-[22px] w-[15px] rounded-[1px] border border-[#979797] bg-linear-to-r from-[#f5f5f5] to-[#c9c9c9]" />
                    <span className="mt-[8px] ml-[4px] size-0 border-x-[3px] border-t-[4px] border-x-transparent border-t-[#555]" />
                  </div>
                </div>
              </div>
              <div className="pt-[44px] pl-[5px]"><ArrowBtn /><ArrowBtn down className="mt-[22px]" /></div>
            </div>
          </Group>
          <Group className="mt-[5px] ml-[6px] h-[31px] w-[283px]">
            <div className="flex h-[29px] items-center pl-[9px]"><Cb on /><span className="w-[174px] pl-[4px]">Цветовые настройки</span><Btn className="h-[21px] w-[73px]">Настроить</Btn></div>
          </Group>
          <div className="mt-[7px] flex pl-[6px]"><Btn className="h-[21px] w-[73px]">Да</Btn><Btn className="ml-[11px] h-[21px] w-[73px]">Отмена</Btn><Btn className="ml-[302px] h-[21px] w-[73px]">Справка</Btn></div>
        </div>
      </div>
    </div>
  );
}

/* ---------- context menu ---------- */

const Sheet = ({ children }) => (
  <svg width="17" height="16" viewBox="0 0 17 16">
    <rect x="0.500" y="1.500" width="13" height="11" fill="#fff" stroke="#8a98a4" />
    <path d="M0 3h14" stroke="#4aa0c8" strokeWidth="3" />
    <path d="M1 6.500h12M1 9.500h12M4.500 4v8M9.500 4v8" stroke="#b4bcc4" />
    {children}
  </svg>
);
const Hand = ({ stop }) => (
  <svg width="17" height="17" viewBox="0 0 17 17">
    <path d="M4 15V10L2.500 8.500L3.500 7.500L5.500 9V2.500Q6.200 1.500 7 2.500V7V1.500Q8 0.500 8.700 1.500V7L9.500 3Q10.500 2.500 11 3.500L10.500 9L12 8V12L10.500 15Z" fill="#fff" stroke="#111" strokeWidth="0.900" />
    {stop && <g><circle cx="12.500" cy="12.500" r="3.800" fill="#e33" stroke="#b00" strokeWidth="0.500" /><path d="M10 10.500l5 4" stroke="#fff" strokeWidth="1.200" /></g>}
  </svg>
);
const IC = {
  hand: <Hand />,
  stop: <Hand stop />,
  t: <svg width="15" height="14" viewBox="0 0 15 14"><path d="M1.500 1.500h12v3.500h-1.500l-0.500-1H9v8.500H6V4H3.500l-0.500 1H1.500z" fill="#777" stroke="#222" /></svg>,
  quote: <Sheet><path d="M8 4v4M5.500 7h5L8 10z" fill="#0a8a0a" stroke="#0a8a0a" strokeWidth="2" /><path d="M13 14v-4M10.500 11h5L13 8z" fill="#f00" stroke="#f00" strokeWidth="1.200" /></Sheet>,
  chart: <svg width="16" height="15" viewBox="0 0 16 15"><rect x="0.500" y="0.500" width="14" height="12" fill="#fff" stroke="#8a98a4" /><path d="M0 1.500h15" stroke="#4aa0c8" strokeWidth="2" /><path d="M2 6l2-1.500 2 1.500 3-1.500 2 1h3" stroke="#e00" fill="none" /><path d="M3 12V9M5.500 12v-2M8 12v-2M10.500 12V9M12.500 12v-3" stroke="#00c" /></svg>,
  bell: <svg width="15" height="14" viewBox="0 0 15 14"><path d="M4 11h7l-1.500-2V5L7.500 3L5.500 5v4zM1 3l2 1M14 3l-2 1M0.500 7h2M14.500 7h-2M1 12l2-1M14 12l-2-1M7 0v2" stroke="#999" fill="none" /></svg>,
  edit: <Sheet><circle cx="9" cy="7" r="2.500" fill="none" stroke="#222" strokeWidth="1.600" /><path d="M11 9l5 5" stroke="#222" strokeWidth="2.600" /></Sheet>,
  copy: <svg width="16" height="14" viewBox="0 0 16 14"><path d="M0.500 0.500h6l2 2v8h-8z" fill="#fff" stroke="#111" /><path d="M6.500 3.500h6l2.500 2.500v7h-8.500z" fill="#fff" stroke="#006" /><path d="M8 7h5M8 9h5M8 11h5M2 4h4M2 6h3" stroke="#006" /></svg>,
  dde: <Sheet><path d="M5 5h4l7 9h-4zM15 5h-3l-7 9h3z" fill="#0a8a0a" /></Sheet>,
  odbc: <Sheet><path d="M9.500 6l2-1.500h4v8l-2 2h-4z" fill="#e8e8e8" stroke="#222" /><path d="M13.500 6v8" stroke="#222" /></Sheet>,
  save: <svg width="15" height="15" viewBox="0 0 15 15"><path d="M0.500 0.500h13.500v13.500h-13.500z" fill="#5a5a10" stroke="#000" /><rect x="3" y="1" width="8.500" height="6" fill="#ccc" /><rect x="4" y="10" width="7" height="4" fill="#000" /><rect x="8" y="10.500" width="2" height="3" fill="#ccc" /></svg>,
  check: <svg width="11" height="10" viewBox="0 0 11 10"><path d="M1 5l3 4L10 1" fill="none" stroke="#999" strokeWidth="1.400" /></svg>,
};
const U = ({ children }) => <u className="underline-offset-2">{children}</u>;
const MENU = [
  ["hand", <><U>Н</U>овая заявка</>, "F2"],
  ["", "Новая Айсберг заявка", "", 1],
  ["stop", <>Новая <U>с</U>топ-заявка</>, "F6"],
  ["", <>Новая <U>б</U>езадресная заявка</>, "", 1],
  null,
  ["t", <><U>В</U>ыполнить транзакцию</>, "Ctrl+T"],
  null,
  ["quote", "[FORTS: Фьючерсы] Si-3.16", ""],
  null,
  ["chart", <><U>Г</U>рафики цены и объема</>, ""],
  ["", "Информация об инструменте", "Alt+I"],
  null,
  ["bell", "Оповещение по параметру", "", 1],
  ["", "SMS-оповещение по параметру", "", 1],
  null,
  ["", <>Информация по кодам <U>р</U>асчетов</>, ""],
  null,
  ["edit", <><U>Р</U>едактировать таблицу</>, "Ctrl+E"],
  ["copy", <><U>К</U>опировать в буфер обмена</>, "Ctrl+C, Ctrl+Insert"],
  null,
  ["dde", <>Вывод через <U>D</U>DE сервер</>, "Ctrl+L", 2],
  ["odbc", <>Вывод по <U>O</U>DBC</>, "Ctrl+O"],
  null,
  ["save", <>Сохранить в <U>ф</U>айл</>, ""],
  null,
  ["", <>Переместить на <U>з</U>акладку</>, <i className="block size-0 border-y-[4px] border-l-[4px] border-y-transparent border-l-black" />],
  null,
  ["check", "Отменить сортировку", "", 1],
];

function ContextMenu() {
  return (
    <div className={`absolute top-[734px] left-[587px] flex h-[445px] w-[364px] flex-col border-t border-l border-[#979797] bg-[linear-gradient(90deg,#f0f0f0_30px,#dcdcdc_30px,#dcdcdc_31px,#f0f0f0_31px)] pt-[2px] text-[12px] tracking-[-0.15px] ${UI}`}>
      {MENU.map((m, i) =>
        m === null ? (
          <div key={i} className="flex h-2 items-center pl-[33px]"><div className="h-[2px] w-[328px] border-t border-[#d0d0d0] bg-white" /></div>
        ) : (
          <div key={i} className={`mx-[2px] flex h-5 items-center pr-[4px] ${m[3] === 1 ? "text-[#7f7f7f]" : ""} ${m[3] === 2 ? "rounded-[3px] border border-[#aecff7] bg-linear-to-b from-[#f2f6fb] to-[#e4ecf7] !pr-[3px]" : ""}`}>
            <span className={`flex w-[33px] items-center justify-center pr-[5px] ${m[3] === 2 ? "-ml-px" : ""}`}>{IC[m[0]]}</span>
            <span className="flex-1">{m[1]}</span>
            <span>{m[2]}</span>
          </div>
        )
      )}
    </div>
  );
}

/* ---------- DDE export dialog ---------- */

function DdeDialog({ name, book, flags, active }) {
  return (
    <div className="h-[500px] w-[310px] border border-[#777] bg-[#f0f0f0]">
      <div className="flex h-[21px] items-center pt-[4px] pl-[9px]">Название таблицы</div>
      <div className="ml-[9px] h-[30px] w-[293px] border border-r-white border-b-white border-[#a0a0a0] pt-[3px] pl-[2px]">{name}</div>
      <div className="mt-[5px] flex h-[22px] items-center pl-[9px]"><span className="w-[95px]">DDE сервер</span><Inp dis className="h-[20px] w-[102px]">SQ1open</Inp><Btn dis className="ml-[7px] h-[21px] w-[88px]">По умолчанию</Btn></div>
      <div className="mt-[3px] flex h-[22px] items-center pl-[11px]"><span className="w-[93px] pb-[4px]">Рабочая книга</span><Inp dis className="h-[20px] w-[168px]">{book}</Inp><Btn dis className="ml-[8px] h-[20px] w-[21px]">...</Btn></div>
      <div className="mt-[2px] flex h-[22px] items-center pl-[11px]"><span className="w-[93px] pb-[5px]">Лист</span><Inp dis className="h-[20px] w-[198px]" /></div>
      <div className="mt-[6px] flex h-[22px] items-center pl-[11px] text-[#7a7a7a]"><Cb dis /><span className="pl-[4px]">Запускать приложение DDE сервера автоматически</span></div>
      <div className="mt-[3px] flex h-[18px] items-center pl-[11px]">Левый верхний угол:</div>
      <div className="mt-[2px] flex h-[22px] items-center pl-[54px]"><span className="w-[53px] pb-[3px]">Ряд</span><Inp dis className="h-[20px] w-[75px] justify-end">1</Inp></div>
      <div className="mt-[2px] flex h-[22px] items-center pl-[54px]"><span className="w-[53px]">Колонка</span><Inp dis className="h-[20px] w-[75px] justify-end">1</Inp></div>
      <div className="mt-[4px] h-[2px] border-t border-[#a0a0a0] bg-white" />
      <div className="mt-[8px] flex h-[22px] items-center pl-[11px]"><span className="w-[213px]">Выводить таблицу,  начиная со строки</span><Inp dis className="h-[20px] w-[77px] justify-end">1</Inp></div>
      <div className="mt-[7px] pl-[54px] text-[#6d6d6d]">
        {["Вывод после создания", "Вывод при нажатии Ctrl+Shift+L", "С заголовками строк", "С заголовками столбцов", "Формальные заголовки", "Выводить пустые ячейки вместо нулей"].map((t, i) => (
          <div key={t} className={`flex h-[21px] items-center ${i === 2 ? "mt-3" : ""}`}><Cb dis on={flags[i]} /><span className="pl-[4px]">{t}</span></div>
        ))}
      </div>
      <div className="mt-[5px] h-[2px] border-t border-[#a0a0a0] bg-white" />
      <div className="mt-[9px] flex justify-between pr-[27px] pl-[28px]"><Btn dis className="h-[21px] w-[133px]">Начать вывод</Btn><Btn className="h-[21px] w-[73px]">Закрыть</Btn></div>
      <div className="mt-[4px] flex justify-between pr-[27px] pl-[28px]"><Btn blue={active} className="h-[21px] w-[133px]">Остановить вывод</Btn><Btn className="h-[21px] w-[73px]">Отменить</Btn></div>
      <div className="mt-[3px] flex justify-between pr-[27px] pl-[28px]"><Btn className="h-[21px] w-[133px]">Вывести сейчас</Btn><Btn className="h-[21px] w-[73px]">Справка</Btn></div>
    </div>
  );
}

const RedClose = () => (
  <span className="flex h-[18px] w-[47px] items-center justify-center rounded-b-[4px] border border-t-0 border-[#5c1c14] bg-linear-to-b from-[#d88a78] via-[#c0442c] to-[#b8452f]">
    <svg width="12" height="9" viewBox="0 0 12 9"><path d="M2 0.500l8 8M10 0.500l-8 8" stroke="#5a3030" strokeWidth="3.600" /><path d="M2.500 1l7 7M9.500 1l-7 7" stroke="#fff" strokeWidth="2.200" /></svg>
  </span>
);

/* ---------- order book windows ---------- */

const B1 = [["794", "138.74"], ["200", "138.73"], ["53", "138.72"], ["675", "138.70", "", 1], ["2,200", "138.69"], ["200", "138.68"], ["181", "138.67"], ["464", "138.66"], ["55", "138.65"], ["41", "138.62"], ["", "138.61", "45"], ["", "138.60", "1"], ["", "138.59", "1"], ["", "138.58", "241"], ["", "138.57", "201"], ["", "138.56", "504"], ["", "138.55", "111"], ["", "138.54", "312"], ["", "138.53", "1,242"], ["", "138.52", "1,872"]];
const B2 = [["129", "103.69"], ["1,158", "103.68"], ["2,425", "103.67"], ["1,661", "103.65"], ["20,900", "103.64"], ["2,338", "103.63"], ["300", "103.62"], ["1,565", "103.61"], ["340", "103.60"], ["3", "103.59"], ["", "103.58", "740"], ["", "103.57", "300"], ["", "103.56", "948"]];
const B3 = [["725", "138.72"], ["28", "138.71"], ["765", "138.70"], ["2,000", "138.69"], ["1,854", "138.68"], ["291", "138.67"], ["44", "138.66"], ["55", "138.65"], ["1,399", "138.64"], ["92", "138.62", "", 1], ["", "138.61", "4,847"], ["", "138.60", "1"], ["", "138.59", "1"], ["", "138.58", "302"], ["", "138.57", "42"], ["", "138.56", "204"], ["", "138.55", "1"], ["", "138.54", "251"], ["", "138.53", "2,018"], ["", "138.52", "1,981"]];
const B4 = [["129", "103.69"], ["1,158", "103.68"], ["425", "103.67"], ["2,561", "103.65"], ["21,400", "103.64"], ["2,439", "103.63"], ["967", "103.62"], ["1,815", "103.61"], ["20", "103.60"], ["370", "103.59"]];

function Book({ title, rows, last, className, pad, tail }) {
  return (
    <div className={`shrink-0 overflow-hidden rounded-tl-[6px] border border-[#666] bg-linear-to-b from-[#b9c8da] to-[#d5e3f2] to-[40px] ${className}`}>
      <div className={`flex h-[28px] items-center pt-[7px] text-[12px] text-[#56657a] ${UI} ${pad}`}>
        <svg width="16" height="15" viewBox="0 0 16 15" className="ml-[3px] mr-[3px]"><rect x="0.500" y="0.500" width="12" height="11" fill="#fff" stroke="#8a98a4" /><path d="M0 1.500h13" stroke="#4aa0c8" strokeWidth="3" /><path d="M6 3h3v3h2L7.500 9.500L4 6h2z" fill="#0a9a0a" /><path d="M11 14v-3H9l3.500-4L16 11h-2v3z" fill="#f01010" /></svg>
        <span className="w-[39px]">{title}</span>
        <span className="flex h-[17px] w-[30px] items-center justify-center rounded-[2px] border border-[#8a9bb3]"><i className="h-[5px] w-[11px] rounded-[1px] border border-[#667] bg-white" /></span>
        <span className="ml-[4px] flex h-[17px] w-[31px] items-center justify-center rounded-[2px] border border-[#8a9bb3]"><i className="h-[8px] w-[11px] rounded-[1px] border-2 border-[#667] bg-white" /></span>
        <span className="ml-[4px] flex h-[17px] w-[25px] items-center justify-center rounded-[2px] border border-[#8a9bb3]">
          <svg width="11" height="9" viewBox="0 0 11 9"><path d="M1.500 0.500l8 8M9.500 0.500l-8 8" stroke="#667" strokeWidth="3.400" /><path d="M2 1l7 7M9 1l-7 7" stroke="#fff" strokeWidth="1.600" /></svg>
        </span>
      </div>
      <div className={pad}>
        <div className={`bg-white text-[11px] ${tail}`}>
          <div className="flex h-[16px] items-center font-bold tracking-[0.2px]"><span className="w-[48px] overflow-hidden pl-[2px]">Продаж</span><span className="w-[56px] text-center">Цена</span><span className="w-[50px] overflow-hidden pl-[2px]">{last}</span></div>
          {rows.map((r, i) => (
            <div key={i} className={`flex h-[15px] items-stretch ${r[3] ? "-mr-px border-y border-[#888]" : ""}`}>
              <span className={`flex w-[48px] items-center justify-end pr-[6px] ${r[2] ? "" : r[3] ? "bg-linear-to-b from-[#f5d4d4] to-[#d99494]" : "bg-[#ffa3a0]"}`}>{r[0]}</span>
              <span className={`flex w-[56px] items-center justify-end border-l border-white/50 pr-[5px] ${r[2] ? "bg-[#a4e27c]" : r[3] ? "bg-linear-to-b from-[#f5d4d4] to-[#d99494]" : "bg-[#ffa3a0]"}`}>{r[1]}</span>
              <span className={`flex w-[52px] items-center justify-end border-l border-[#ddd] pr-[6px] ${r[2] ? "bg-[#a4e27c]" : r[3] ? "bg-[#e4e4e4]" : ""}`}>{r[2]}</span>
            </div>
          ))}
        </div>
      </div>
    </div>
  );
}

const Palette = () => (
  <svg width="16" height="16" viewBox="0 0 16 16" className="shrink-0">
    <rect width="16" height="16" fill="#000" />
    {["#f00", "#ff0", "#0c0", "#0ff", "#fff", "#f0f", "#800", "#00f", "#ccc"].map((c, i) => (
      <rect key={c} x={1 + (i % 3) * 5} y={1 + Math.floor(i / 3) * 5} width="4" height="4" fill={c} />
    ))}
  </svg>
);
const Radio = ({ on, className = "" }) => (
  <span className={`flex size-3 shrink-0 items-center justify-center rounded-full border border-[#888] bg-[#eee] ${className}`}>{on && <i className="size-[7px] rounded-full bg-[#1f5f9f]" />}</span>
);
/* vertical arrow whose box is 6 x 9 with its top left corner at x, y */
const Arr = ({ x, y, c, up }) => (
  <path d={up ? `M${x + 3} ${y}l3 4h-2v5h-2v-5h-2z` : `M${x + 3} ${y + 9}l3-4h-2v-5h-2v5h-2z`} fill={c} />
);
const View = ({ kind }) => (
  <svg width="32" height="33" viewBox="0 0 32 33" className="shrink-0" fontSize="12" fontWeight="bold" fontFamily="Liberation Sans">
    <rect x="0.500" y="0.500" width="31" height="32" fill="#fff" stroke="#999" />
    {kind === 0 && <g><rect x="1" y="4" width="30" height="14" fill="#ffa3a0" /><rect x="1" y="18" width="30" height="14" fill="#b4f8b4" /></g>}
    {kind === 1 && <g><rect x="10" y="4" width="21" height="14" fill="#ffa3a0" /><rect x="1" y="18" width="20" height="14" fill="#b4f8b4" /></g>}
    {kind === 2 && <g><rect x="1" y="4" width="15" height="28" fill="#b4f8b4" /><rect x="16" y="4" width="15" height="28" fill="#ffa3a0" /></g>}
    <rect width="32" height="4" fill="#0a6aa8" />
    {kind === 0 && <g><text x="8" y="16" fill="#400">$</text><Arr x={18} y={7} c="#c00" /><text x="8" y="30" fill="#060">$</text><Arr x={18} y={21} c="#080" up /></g>}
    {kind === 1 && <g><text x="12" y="16" fill="#400">$</text><Arr x={22} y={7} c="#c00" /><Arr x={4} y={21} c="#080" up /><text x="12" y="30" fill="#060">$</text></g>}
    {kind === 2 && <g><Arr x={2} y={7} c="#080" up /><text x="9" y="16" fill="#060">$</text><text x="17" y="16" fill="#400">$</text><Arr x={24} y={7} c="#c00" up /></g>}
  </svg>
);
const Num = ({ l, last }) => (<><span className="w-[51px]">{l}</span><Inp dis className={`h-[20px] w-[60px] !px-[2px] ${last ? "" : "mr-[4px]"}`}>0</Inp></>);

function BookEditor() {
  return (
    <div className={`absolute top-[1442px] left-4 h-[598px] w-[730px] overflow-hidden bg-[linear-gradient(90deg,#e8eef5_0,#e8eef5_185px,#7d93ad_185px,#7d93ad_240px,#b49a78_500px,#c9c4bb)] ${SANS}`}>
      <div className="flex h-[3px] items-end overflow-hidden bg-white pl-[14px] text-[11px] leading-[6px] *:-mt-1"><span className="w-[88px]">LKH6</span><span className="w-[76px]">LKOH-3.16</span><span className="w-[52px]">SPBFUT</span><span className="w-[60px]">1</span><span className="w-[55px]">25,930</span><span className="w-[60px]">25,942</span><span>25,933</span></div>
      <div className="absolute top-[7px] left-[5px]">
        <Book title="ГАЗ..." rows={B1} last="Покупка" className="h-[355px] w-[175px]" pad="pl-[7px]" tail="w-[158px] h-[317px]" />
        <div className="pl-[7px]"><Book title="Сбе..." rows={B2} last="Покупк" className="h-[240px] w-[166px]" pad="" tail="w-[158px]" /></div>
      </div>
      <div className="absolute top-[3px] right-0 h-[595px] w-[10px] bg-linear-to-r from-[#777] to-[#bbb]" />
      <div className="absolute top-[5px] left-[187px] h-[620px] w-[538px] rounded-t-[7px] border-2 border-[#453018] bg-[linear-gradient(90deg,#f0c080,#ffd890_40%,#f5bc70)]">
        <div className={`flex h-[27px] items-start justify-between rounded-t-[6px] bg-linear-to-b from-[#f3c788] via-[#e0ad70] to-[#eec088] pr-[6px] pl-[5px] text-[11.5px] ${UI}`}>
          <span className="pt-[6px] tracking-[-0.55px]">Редактирование таблицы котировок по ГАЗПРОМ ао [МБ ФР: Т+ Акции и ДР]</span>
          <RedClose />
        </div>
        <div className="ml-[4px] h-[600px] w-[524px] border border-[#666] bg-[#f0f0f0]">
          <div className="mt-[7px] flex h-[20px] items-center pl-[6px]"><span className="w-[89px]">Имя таблицы</span><Inp className="h-[20px] w-[421px] !border-[#6aa5dd] !px-[2px]"><span className="flex h-[14px] w-[251px] items-center bg-[#3399ff] text-white">ГАЗПРОМ ао [МБ ФР: Т+ Акции и ДР] Котировки</span><span className="h-[14px] w-[7px] bg-black" /></Inp></div>
          <div className="mt-[7px] flex">
            <Group className="ml-[9px] h-[248px] w-[259px]" label="Вид котировочного окна">
              <div className="mt-[10px] flex items-center pl-[5px]"><Radio className="mr-[6px]" /><View kind={0} /><Radio on className="mr-[6px] ml-[13px]" /><View kind={1} /><Radio className="mr-[6px] ml-[14px]" /><View kind={2} /></div>
              <div className="mt-[10px] flex h-[22px] items-center pl-[5px]"><Cb on /><span className="pl-[4px]">Лучшие спрос и предложение видны всегда</span></div>
              <div className="mt-[3px] flex h-[22px] items-center pl-[5px]"><Cb /><span className="pl-[4px]">Покупку показывать сверху</span></div>
              <div className="mt-[4px] flex h-[22px] items-center pl-[5px]"><Cb /><span className="w-[197px] pl-[4px]">Выделять свои заявки</span><Btn className="h-[21px] w-[28px]">...</Btn></div>
              <div className="mt-[7px] flex h-[22px] items-center pl-[5px]"><Cb /><span className="w-[197px] pl-[4px]">Показывать панель инструментов</span><Btn className="h-[21px] w-[28px]">...</Btn></div>
              <div className="mt-[4px] flex h-[22px] items-center pl-[5px]"><Cb /><span className="pl-[4px]">Использовать drag-and-drop</span></div>
              <div className="mt-[4px] flex h-[22px] items-center pl-[5px]"><Cb /><span className="pl-[4px]">Разреженный стакан</span></div>
              <div className="mt-[4px] flex h-[22px] items-center pl-[5px]"><Cb /><span className="pl-[4px]">Быстрый ввод/снятие заявки</span></div>
            </Group>
            <div className="ml-[4px] w-[245px]">
              <Group className="h-[82px]" label={<span className="flex items-center bg-[#f0f0f0]"><Cb on className="-my-px" /><span className="pl-[3px]">Выделять котировки цветом</span></span>}>
                <div className="-mt-px flex h-[20px] items-center pl-[80px]"><span className="w-[77px]">Цвет фона</span>Цвет текста</div>
                <div className="mt-[4px] flex items-center pl-[9px]"><span className="w-[62px]">Покупка</span><i className="mr-[2px] h-[15px] w-[57px] border-2 border-[#555] bg-[#a4e27c]" /><Palette /><i className="mr-[2px] ml-[7px] h-[15px] w-[56px] border-2 border-[#aaa] bg-black" /><Palette /></div>
                <div className="mt-[7px] flex items-center pl-[9px]"><span className="w-[62px]">Продажа</span><i className="mr-[2px] h-[15px] w-[57px] border-2 border-[#555] bg-[#ffa3a0]" /><Palette /><i className="mr-[2px] ml-[7px] h-[15px] w-[56px] border-2 border-[#aaa] bg-black" /><Palette /></div>
              </Group>
              <Group className="mt-[7px] h-[77px]" label={<span className="flex items-center bg-[#f0f0f0]"><Cb className="-my-px" /><span className="pl-[3px]">Быстрый ввод объема заявки</span></span>}>
                <div className="mt-[6px] flex h-[21px] items-center pl-[9px]"><Num l="Объем 1" /><Num l="Объем 2" last /></div>
                <div className="mt-[9px] flex h-[21px] items-center pl-[9px]"><Num l="Объем 3" /></div>
              </Group>
              <Group className="mt-[6px] h-[76px]" label={<span className="flex items-center bg-[#f0f0f0]"><Cb className="-my-px" /><span className="pl-[3px]">Брать отступ цены</span></span>}>
                <div className="mt-[5px] flex h-[21px] items-center pl-[9px]"><Num l="Отступ 1" /><Num l="Отступ 2" last /></div>
                <div className="mt-[7px] flex h-[21px] items-center pl-[9px]"><Num l="Отступ 3" /><Num l="Отступ 4" last /></div>
              </Group>
            </div>
          </div>
          <Group className="mt-[7px] ml-[9px] h-[42px] w-[507px]" label="Фильтрация">
            <div className="flex h-[24px] items-center pl-[5px]"><Cb /><span className="w-[253px] pl-[4px]">Применять глобальный фильтр клиентов</span><Cb /><span className="w-[184px] pl-[4px]">Фильтр клиентов</span><Btn className="h-[21px] w-[28px]">...</Btn></div>
          </Group>
          <Group className="mt-[8px] ml-[9px] h-[195px] w-[507px]" label="Набор параметров">
            <div className="mt-[3px] flex h-[22px] items-center pl-[11px]"><span className="w-[296px]">Доступные параметры</span>Заголовки столбцов</div>
            <div className="flex pl-[4px]">
              <div className="w-[174px]">
                <Search />
                <div className="h-[138px] border border-[#828790] bg-white pt-[2px] pl-[3px] leading-[13px]">
                  {["Доходность покупки", "Сумма лучшей покупки", "Своя покупка", "Покупка", "Цена", "Продажа", "Своя продажа", "Сумма лучшей продажи", "Доходность продажи"].map((t) => <div key={t}>{t}</div>)}
                </div>
              </div>
              <div className="w-[115px] pt-[11px] pl-[7px]">
                <Btn dis className="h-[21px] w-[102px]">Добавить</Btn>
                <Btn className="mt-[3px] h-[21px] w-[102px]">Добавить все</Btn>
                <Btn dis className="mt-[12px] h-[21px] w-[102px]">Убрать</Btn>
                <Btn className="mt-[3px] h-[21px] w-[102px]">Очистить</Btn>
                <Btn className="mt-[10px] h-[21px] w-[102px]">Перевернуть</Btn>
              </div>
              <div className="w-[174px]">
                <Search />
                <div className="h-[138px] border border-[#828790] bg-white pt-[2px] pl-[3px] leading-[13px]"><div>Продажа</div><div>Цена</div><div>Покупка</div></div>
              </div>
              <div className="pt-[37px] pl-[7px]"><ArrowBtn /><ArrowBtn down className="mt-[29px]" /></div>
            </div>
          </Group>
          <div className="mt-[7px] flex pl-[9px]"><Btn blue className="h-[21px] w-[73px]">Да</Btn><Btn className="ml-[9px] h-[21px] w-[73px]">Отмена</Btn><Btn className="ml-[277px] h-[21px] w-[73px]">Справка</Btn></div>
        </div>
      </div>
    </div>
  );
}

/* ---------- charts ---------- */

const CANDLES = [
  [1, 437, 445, 458, 486], [0, 414, 462, 495, 503], [1, 462, 484, 496, 522], [0, 468, 483, 501, 528], [1, 468, 489, 503, 522], [1, 450, 457, 469, 492], [0, 456, 456, 555, 558], [0, 513, 570, 588, 627],
  [0, 555, 588, 600, 615], [1, 555, 582, 590, 615], [0, 537, 555, 582, 585], [0, 564, 574, 588, 633], [1, 531, 544, 590, 609], [1, 438, 451, 545, 567], [1, 375, 427, 458, 503], [1, 357, 409, 428, 430],
  [0, 390, 426, 450, 487], [1, 345, 403, 433, 453], [0, 380, 390, 414, 429], [0, 396, 402, 437, 459], [0, 420, 432, 461, 465], [0, 420, 450, 483, 486], [1, 445, 490, 496, 503], [0, 456, 456, 477, 505],
  [1, 432, 439, 470, 486], [0, 438, 456, 477, 486], [0, 445, 477, 495, 503], [1, 477, 489, 503, 515], [0, 438, 462, 489, 492], [0, 462, 483, 507, 510], [0, 483, 501, 507, 528], [0, 507, 525, 576, 639],
  [1, 570, 577, 583, 621], [0, 555, 594, 600, 615], [0, 555, 594, 612, 645], [0, 612, 630, 662, 666], [1, 620, 625, 664, 690], [1, 549, 607, 659, 660], [0, 549, 564, 594, 621], [0, 570, 600, 624, 627],
  [0, 594, 606, 612, 630], [0, 600, 618, 636, 666], [1, 576, 595, 659, 666], [0, 588, 588, 630, 645], [1, 583, 583, 626, 626], [0, 594, 612, 642, 696], [0, 624, 663, 669, 672], [0, 657, 675, 723, 735],
  [0, 705, 723, 816, 846], [0, 792, 816, 825, 852], [1, 786, 832, 846, 852], [1, 774, 793, 838, 864], [0, 762, 798, 804, 828], [1, 711, 787, 794, 806], [0, 768, 768, 810, 840], [1, 780, 781, 811, 812],
  [0, 780, 792, 798, 852], [1, 756, 763, 788, 806], [1, 744, 763, 782, 788], [1, 711, 745, 751, 759],
];
const VOL = [21, 48, 27, 18, 24, 18, 36, 30, 21, 42, 24, 21, 24, 36, 42, 33, 30, 27, 9, 18, 36, 21, 24, 27, 21, 21, 18, 15, 9, 9, 21, 27, 30, 15, 30, 66, 46, 27, 27, 30, 45, 30, 18, 21, 24, 24, 48, 51, 60, 42, 30, 42, 69, 24, 21, 45, 51, 39, 117, 42];

const Candle = ({ x, c, w = 4 }) => {
  const [up, hi, a, b, lo] = c;
  const color = up ? "#4169e1" : "#cd5c5c";
  return (
    <g stroke={color} shapeRendering="crispEdges">
      <path d={up ? `M${x} ${hi}V${a}M${x} ${b}V${lo}` : `M${x} ${hi}V${lo}`} />
      <rect x={x - w / 2} y={a} width={w} height={Math.max(1, b - a)} fill={up ? "#fff" : color} />
    </g>
  );
};

const LADDER = [["25", 2], ["30", 3], ["57", 4], ["82", 6], ["98", 7], ["107", 8], ["157", 10], ["175", 11], ["426", 25], ["465", 27], ["485", 28], ["588", 34], ["599", 35], ["602", 35], ["1,438", 81], ["1,439", 81], ["1,466", 83], ["1,484", 83]];
const LADDER2 = [["137", 28], ["152", 32], ["177", 36], ["241", 48], ["255", 51], ["310", 61], ["403", 79], ["441", 88], ["459", 91], ["462", 91], ["468", 93], ["470", 94], ["479", 96], ["490", 98], ["498", 99], ["504", 100], ["572", 114]];

/* short bars keep their label at the left edge and let it run past the bar */
const Ladder = ({ rows }) =>
  rows.map(([t, w]) => (
    <div key={t} className={`flex h-[14px] items-center border-t border-r border-[#a9cfa9] bg-[#e3fde3] ${w < 28 ? "justify-start pl-px" : "justify-end pr-[5px]"}`} style={{ width: w }}>
      <span className="shrink-0">{t}</span>
    </div>
  ));

function ResultChart() {
  return (
    <div className="absolute top-[2208px] left-[1042px] flex h-[364px] w-[520px] flex-col border-[4px] border-t-[3px] border-r-0 border-[#a0a0a0] bg-[#f0f0f0] shadow-[4px_5px_9px_1px_rgba(0,0,0,0.75)]">
      <div className="flex h-[296px] bg-[#a9a9a9]">
        <div className="h-[30px] w-[6px] shrink-0 bg-[#ffa500]" />
        <div className="flex w-[413px] shrink-0 flex-col">
          <div className="h-[6px]"><div className="h-[6px] w-[30px] bg-[#ffa500]" /></div>
          <div className="flex h-[245px]">
            <div className="flex w-[364px] flex-col bg-white">
              <svg width="364" height="228" viewBox="1052 2217 364 228">
                <path d="M1053.500 2217v228" stroke="#ccc" />
                <path d="M1052 2217.500h364" stroke="#2e8b2e" />
                <path d="M1054 2237.500h362M1054 2278.500h362M1054 2320.500h362M1054 2361.500h362M1054 2402.500h362" stroke="#efefef" />
                {CANDLES.map((c, i) => (<Candle key={i} x={1058.5 + 6 * i} c={[c[0], 2130 + c[1] / 3, 2130 + c[2] / 3, 2130 + c[3] / 3, 2130 + c[4] / 3]} />))}
                <g fontFamily="Liberation Sans" fontSize="11"><text x="1060" y="2230" fill="#aaa">spread[30]</text><text x="1056" y="2230" fill="#111" textLength="106">Price [RIH6 1-Minute]</text></g>
              </svg>
              <div className={`flex h-[17px] items-center bg-[#dcdcdc] pl-1 text-[10px] text-[#228b22] ${MONO}`}>Wed 24-Feb-2016</div>
            </div>
            <div className={`flex flex-1 flex-col items-end bg-[#dcdcdc] pr-[3px] text-[10px] ${MONO}`}>
              <span className="flex h-[14px] w-[41px] items-center justify-end bg-black pr-[3px] text-white">73,296</span>
              <span className="h-[14px] pr-[2px] leading-[14px]">73,200</span>
              <span className="mt-[27px] h-[14px] pr-[2px] leading-[14px]">73,000</span>
              <span className="mt-[28px] h-[14px] pr-[2px] leading-[14px]">72,800</span>
              <span className="mt-[27px] h-[14px] pr-[2px] leading-[14px]">72,600</span>
              <span className="mt-[27px] h-[14px] pr-[2px] leading-[14px]">72,400</span>
              <span className="mt-[28px] h-[14px] pr-[2px] leading-[14px]">72,200</span>
            </div>
          </div>
          <div className="h-[6px]"><div className="h-[6px] w-[30px] bg-[#ffa500]" /></div>
          <div className="flex h-[39px]">
            <svg width="364" height="39" viewBox="1052 2468 364 39" className="bg-white">
              <path d="M1054 2484.500h362M1054 2502.500h362" stroke="#e4e4e4" />
              {VOL.map((v, i) => (<rect key={i} x={1056 + 6 * i} y={2507 - v / 3} width="5" height={v / 3} fill="#5f9ea0" />))}
              <text x="1056" y="2481" fontFamily="Liberation Sans" fontSize="11" fill="#5f9ea0" textLength="117">Volume [RIH6 1-Minute]</text>
            </svg>
            <div className={`flex flex-1 flex-col items-end bg-[#dcdcdc] pt-[11px] pr-[3px] text-[10px] ${MONO}`}><span className="h-[13px] pr-[2px]">200</span><span className="flex h-[15px] w-[17px] items-center justify-center bg-[#5f9ea0] text-white">43</span></div>
          </div>
        </div>
        <div className="h-[30px] w-[6px] shrink-0 bg-[#ffa500]" />
        <div className={`w-[83px] shrink-0 overflow-hidden bg-white text-[10px] ${MONO}`}>
          <div className="mt-[6px] flex h-[28px] items-start border-t border-[#e0d0a0] pt-[3px]"><span className="w-[17px] border-l-2 border-[#b5d5b5] pl-px">9</span><span className="text-[#aaa]">spread[30]</span></div>
          <Ladder rows={LADDER} />
        </div>
        <div className="ml-[4px] h-[30px] w-[4px] bg-[#ffa500]" />
      </div>
      <HScroll className="mt-px w-[508px]" thumb="ml-[240px] w-[37px]" />
      <div className={`mt-[2px] flex h-[20px] w-[508px] items-center border-t border-[#aaa] bg-[#f0edec] pl-[6px] text-[11px] tracking-[-0.2px] ${UI}`}>
        <span className="flex w-[42px] items-center gap-[6px]">Bars<Caret /></span>
        <span className="flex w-[63px] items-center gap-[6px]">Strategy<Caret /></span>
        <span className="flex items-center gap-[6px]">Backtest<Caret /></span>
      </div>
      <div className={`mt-[2px] flex h-[21px] items-start border-t border-[#777] text-[11.5px] ${UI}`}>
        <svg width="20" height="20" viewBox="0 0 20 20" className="shrink-0"><path d="M4 0L19 18h1V0z" fill="#fff" /><path d="M4 0L17 17l3 2" stroke="#666" fill="none" /></svg>
        <div className="flex h-[20px] w-[195px] items-center rounded-br-[3px] border-r border-b border-[#666] bg-white pl-[5px] font-bold tracking-[-0.05px]">TwoMAsCompiled-DLL ctx/Def...</div>
        <div className="ml-auto flex h-[21px] items-center gap-2 pr-[16px]"><Caret /><Close /></div>
      </div>
    </div>
  );
}

const MINI = [[1, 302, 320, 352, 378], [0, 290, 311, 322, 346], [0, 332, 332, 350, 368], [1, 300, 325, 338, 350], [1, 288, 303, 340, 345], [0, 264, 295, 348, 360], [0, 332, 348, 380, 385], [0, 358, 358, 380, 385], [1, 285, 318, 348, 380]];

function ChartSettings() {
  return (
    <div className="absolute top-[2146px] left-[33px] h-[429px] w-[867px] border-[4px] border-t-[1px] border-[#a0a0a0] bg-[#f0f0f0] shadow-[4px_5px_9px_1px_rgba(0,0,0,0.75)]">
      <div className="flex h-[360px] bg-[#a9a9a9]">
        <svg width="663" height="360" viewBox="37 2147 663 360" className="shrink-0">
          <rect x="37" y="2147" width="663" height="360" fill="#a9a9a9" />
          <path d="M37 2147h35v6h-29v24h-6zM43 2182h29v6h-29z" fill="#ffa500" />
          <rect x="43" y="2153" width="657" height="29" fill="#fff" />
          <rect x="43" y="2188" width="657" height="319" fill="#fff" />
          <path d="M43 2173.500h657M43 2226.500h657M43 2258.500h657M43 2321.500h657M43 2354.500h657M43 2387.500h657M43 2419.500h657M43 2451.500h657M671.500 2188v319" stroke="#eee" />
          {[2, 3, 9, 21, 12, 5, 16, 9, 7].map((h, i) => (<rect key={i} x={45 + i * 8} y={2182 - h} width="7" height={h} fill="#5f9ea0" />))}
          {[5, 5, 10, 7, 6, 6, 9, 4, 8, 8, 3, 12, 21, 9, 11, 8].map((h, i) => (<rect key={i} x={572 + i * 8} y={2182 - h} width="7" height={h} fill="#5f9ea0" />))}
          <path d="M43 2188.500h659" stroke="#e8442c" strokeWidth="2" />
          <path d="M46 2203.500h656" stroke="#067a06" strokeWidth="3" />
          {MINI.map((c, i) => (<Candle key={i} w={6} x={631.5 + 8 * i} c={[c[0], 2130 + c[1] / 3, 2130 + c[2] / 3, 2130 + c[3] / 3, 2130 + c[4] / 3]} />))}
          <g fontFamily="Liberation Sans" fontSize="11"><text x="47" y="2166" fill="#5f9ea0">Volume [RIH6</text><text x="50" y="2201" fill="#aaa">spread[40]</text><text x="47" y="2201">Price [RIH6 1</text></g>
        </svg>
        <div className={`flex w-[51px] flex-col items-end bg-[#dcdcdc] pr-[5px] text-[10px] ${MONO}`}>
          <span className="mt-[18px] flex h-[17px] w-[23px] items-center justify-center bg-[#5f9ea0] text-white">209</span>
          <span className="mt-[5px] flex h-[15px] w-[41px] items-center justify-end bg-black pr-[2px] text-white">74,228</span>
          <span className="mt-[17px] h-[14px] pr-[2px] leading-[14px]">74,000</span>
          <span className="mt-[18px] h-[14px] pr-[2px] leading-[14px]">73,800</span>
          <span className="mt-[50px] h-[14px] pr-[2px] leading-[14px]">73,400</span>
          <span className="mt-[18px] h-[14px] pr-[2px] leading-[14px]">73,200</span>
          <span className="mt-[19px] h-[14px] pr-[2px] leading-[14px]">73,000</span>
          <span className="mt-[18px] h-[14px] pr-[2px] leading-[14px]">72,800</span>
          <span className="mt-[18px] h-[14px] pr-[2px] leading-[14px]">72,600</span>
          <span className="mt-[18px] h-[14px] pr-[2px] leading-[14px]">72,400</span>
        </div>
        <div className="h-[30px] w-[5px] bg-[#ffa500]" />
        <div className={`flex-1 overflow-hidden bg-white text-[10px] leading-[14px] ${MONO}`}>
          <div className="h-[14px]"><span className="inline-block h-full border-l-2 border-[#f0b0b0] bg-[#fff4f4]">24</span></div>
          <div className="h-[14px]"><span className="inline-block h-full border-l-2 border-[#f0b0b0]">19</span></div>
          <div className="h-[14px] border-b border-[#f0c898]"><span className="inline-block h-full border-l-2 border-[#b5d5b5]">36</span></div>
          <div className="flex h-[14px]"><span className="w-[75px] border-l-2 border-[#b5d5b5]">41</span><span className="pt-[2px] text-[#aaa]">spread[40]</span></div>
          <div className="h-[14px]"><span className="inline-block h-full border-x-2 border-[#b5d5b5]">50</span></div>
          <Ladder rows={LADDER2} />
        </div>
      </div>
      <HScroll className="mt-[2px]" thumb="ml-[300px] w-[340px]" />
      <div className={`mt-[2px] flex h-[22px] items-center border-t border-[#aaa] bg-[#f0edec] text-[11px] tracking-[-0.2px] ${UI}`}>
        <span className="ml-px flex h-[18px] w-[41px] items-center justify-between rounded-[2px] border border-[#555] px-1">Bars<Caret /></span>
        <span className="ml-[6px] flex w-[56px] items-center gap-[5px]">Strategy<Caret /></span><span className="ml-[7px] flex w-[55px] items-center gap-[5px]">Backtest<Caret /></span>
        <span className="ml-[71px] flex h-[18px] w-[71px] items-center justify-center rounded-[2px] border border-[#555]">EmitOrders</span>
        <span className="ml-[2px] flex h-[18px] w-[536px] items-center rounded-[2px] border border-[#555]"><Quik /><span className="pl-[2px] tracking-[0px]">QuikStreaming-inititedFromDS Subscribed TriggeringScript #059 15:44:59.000 :: 15:44:58.561 00:01</span></span>
      </div>
      <div className={`flex h-[21px] items-start text-[11.5px] ${UI}`}>
        <svg width="20" height="20" viewBox="0 0 20 20" className="shrink-0"><path d="M4 0L19 18h1V0z" fill="#fff" /><path d="M4 0L17 17l3 2" stroke="#666" fill="none" /></svg>
        <div className="flex h-[20px] w-[195px] items-center rounded-br-[3px] border-r border-b border-[#666] bg-white pl-[5px] font-bold tracking-[-0.05px]">TwoMAsCompiled-DLL ctx/Def...</div>
        <div className="flex h-[20px] flex-1 items-center border-b border-[#777] bg-[#e0e0e0] pl-[14px] tracking-[-0.2px]">DataSource</div>
      </div>
    </div>
  );
}

function BarsMenu() {
  return (
    <div className={`absolute top-[2227px] left-[38px] h-[299px] w-[581px] border border-[#8a8a8a] bg-[linear-gradient(90deg,#f1f1f1_24px,#fbfbfb_24px)] text-[11.5px] tracking-[-0.15px] ${UI}`}>
      <div className="flex h-[24px] items-center pl-[36px] font-bold text-[#777]">RIH6 ::</div>
      <div className="flex h-[20px] items-center pl-[36px] font-bold text-[#777]">1-Minu</div>
      <div className="mt-[4px] ml-[32px] h-px bg-[#ccc]" />
      <div className="mt-[3px] flex h-[21px] items-center border border-[#3399ff] bg-[#c2e0ff]">
        <span className="flex h-[19px] w-[21px] items-center justify-center border border-[#3399ff] bg-[#b0d4fa]">
          <svg width="8" height="8" viewBox="0 0 8 8"><path d="M1 4l2 3L7 1" fill="none" stroke="#0c2f7a" strokeWidth="1.600" /></svg>
        </span>
        <span className="pl-[14px] tracking-[-0.05px]">Subscribed to [QuikStreaming-inititedFromDS][UpstreamConn</span>
      </div>
      <div className="flex h-[22px] items-center pl-[36px]">Re-Backtest after Subscribe</div>
      <div className="mt-[2px] mb-[2px] ml-[32px] h-px bg-[#ccc]" />
      {[["Years", ""], ["Months", ""], ["Weeks", ""], ["Days", ""], ["Hours", ""], ["Minutes", "1"]].map(([l, v]) => (
        <div key={l} className="flex h-[24px] items-center pl-[32px]">
          <span className={`flex h-[22px] items-center pr-[8px] pl-[4px] ${v ? "bg-[#dcdcdc]" : ""}`}><Inp className="h-[19px] w-[40px] justify-end !bg-[#ffffe1] !px-[2px]">{v}</Inp><span className="pl-[8px]">{l}</span></span>
        </div>
      ))}
      <div className="mt-[2px] mb-[2px] ml-[32px] h-px bg-[#ccc]" />
      <div className="flex h-[24px] items-center pl-[32px]"><span className="flex h-[22px] items-center bg-[#dcdcdc] pr-[8px] pl-[4px]"><Inp className="h-[19px] w-[40px] justify-end !bg-[#ffffe1] !px-[2px]">510</Inp><span className="pl-[8px]">Last Bars</span></span></div>
      <div className="flex h-[23px] items-center pl-[36px]">Show Bars Range Selector</div>
    </div>
  );
}

const Note = ({ className, lines }) => (
  <div className={`absolute bg-[#ffff00] leading-[22px] text-[#1a1a6a] ${SANS} ${className}`}>
    {lines.map((l, i) => (<div key={i} className="h-[22px]">{l}</div>))}
  </div>
);

/* ---------- page ---------- */

export default function App() {
  return (
    <div className={`relative h-[2620px] w-[1615px] overflow-hidden bg-white text-[11px] leading-none whitespace-pre text-black ${SANS}`}>
      <div className="absolute top-[15px] left-4 h-[2588px] w-[1582px] bg-white shadow-[4px_5px_12px_rgba(0,0,0,0.9)]" />

      <TopWindow />
      <ParamsEditor />
      <ContextMenu />

      <div className="absolute top-[733px] left-[974px] w-[314px] border-x-2 border-b-2 border-[#f3e6a0] border-r-[#3a2c20] bg-[#fbf0a8] shadow-[4px_5px_9px_1px_rgba(0,0,0,0.75)]">
        <div className={`flex h-[25px] items-start justify-between bg-linear-to-b from-[#ffffc8] to-[#fbf2b0] pl-[2px] text-[12px] ${UI}`}>
          <span className="pt-[4px] tracking-[-0.15px]">Вывод через DDE сервер</span>
          <span className="mr-px flex h-[15px] w-[47px] justify-center rounded-b-[4px] border border-t-0 border-[#b0a070]"><svg width="11" height="9" viewBox="0 0 11 9"><path d="M1.500 0.500l8 8M9.500 0.500l-8 8" stroke="#555" strokeWidth="3.400" /><path d="M2 1l7 7M9 1l-7 7" stroke="#fff" strokeWidth="1.600" /></svg></span>
        </div>
        <DdeDialog name="Текущая таблица параметров" book="SQ1open-quotes" flags={[1, 1, 0, 1, 1, 0]} />
      </div>

      <BookEditor />
      <div className="absolute top-[1937px] left-[673px]"><Cursor /></div>

      <div className="absolute top-[1456px] left-[755px] flex h-[544px] w-[503px] items-start overflow-hidden bg-[linear-gradient(90deg,#d5e3f2_0,#d5e3f2_175px,#6e8097_178px,#a87c48_480px,#5a3c1c)]">
        <div className="mt-[4px]">
          <Book title="ГАЗ..." rows={B3} last="Покупка" className="h-[355px] w-[175px]" pad="pl-[7px]" tail="w-[158px] h-[317px]" />
          <div className="pl-[7px]"><Book title="Сбе..." rows={B4} last="Покупк" className="h-[240px] w-[166px]" pad="" tail="w-[158px]" /></div>
        </div>
        <div className="mt-[4px] ml-[4px] h-[535px] w-[323px] rounded-[7px] border-2 border-[#453018] bg-linear-to-b from-[#f7cf94] via-[#ffd890] to-[#f0b868] pl-[5px]">
          <div className={`flex h-[26px] items-start justify-between pr-[6px] text-[12px] ${UI}`}><span className="pt-[6px] tracking-[-0.15px]">Вывод через DDE сервер</span><RedClose /></div>
          <DdeDialog name="ГАЗПРОМ ао [МБ ФР: Т+ Акции и ДР] Котировки" book="SQ1open-GAZP-dom" flags={[1, 1, 0, 1, 1, 1]} active />
        </div>
      </div>
      <div className="absolute top-[1577px] left-[1097px]"><Cursor /></div>

      <ChartSettings />
      <BarsMenu />
      <Note className="top-[2145px] left-[112px] h-[139px] w-[458px] pt-[4px] pl-[9px] text-[18.5px]" lines={["чтобы чарт получал последнюю квоту и стакан из", "Streaming настроенного в DataSource; чарт", "оживёт и начнёт \"расти\" вправо; независимо", "открыт(ы) ли чарт(ы) и подписан(ы) ли он(и)  -", "Streaming всегда сохраняет пришедшие квоты в", "бары символа (с частотой DS'а:"]} />
      <div className="absolute top-[2256px] left-[405px] h-[40px] w-[355px] bg-white pt-px pl-[5px]">
        <div className="flex h-[28px] w-[340px] items-center bg-[#f0edec] pl-[2px] shadow-[3px_4px_6px_rgba(0,0,0,0.75)]">
          <Inp className="h-[19px] w-[59px] !px-[2px]">QUIK-open</Inp><Spin className="ml-[7px] h-[20px] w-[40px]" /><Combo className="ml-[2px] h-[21px] w-[69px] !px-[3px]">Minute</Combo>
          <span className={`ml-2 w-[57px] text-[11px] ${UI}`}>Symbols:</span><Inp className="h-[19px] w-[90px] !px-[2px]">GAZP,SBER,RIH6</Inp>
        </div>
      </div>
      <Note className="top-[2307px] left-[217px] h-[214px] w-[473px] border border-[#bbb] pt-[5px] pl-[9px] text-[18.9px]" lines={["EmitOrders - чтобы Alerts сгенерированные", "скриптом ухожили на биржу через BrokerAdapter", "(сконфигурированный в DataSource); нажато =>", "Alert становится Order'ом, и статус Order'а видно", "тут: MainMenu => Tools => OrderExecution (F3)", "", "все три настройки работают одинаково для живого", "коннекта через квик, и через", "ChartMenu=>Strategy=>Show LiveSimulator"]} />
      <Note className="top-[2545px] left-[324px] h-[29px] w-[568px] pt-px pl-[11px] text-[19px]" lines={["чтобы вызывались методы скрипта:TwoMACompiled.On*()"]} />
      <div className="absolute top-[2290px] left-[217px]"><Cursor /></div>

      <Note className="top-[2147px] left-[1038px] h-[54px] w-[533px] border border-[#aaa] pt-[3px] pl-[11px] text-[19.2px]" lines={["результат: Chart меняется синхронно с QUIK'ом", "(чарт добавляет бары справа, стакан real-time)"]} />
      <ResultChart />

      {/* annotations drawn over the windows */}
      <svg className="pointer-events-none absolute top-0 left-0 z-30" width="1615" height="2620" viewBox="0 0 1615 2620" fill="none">
        <g stroke="#f02828" strokeWidth="1.800" strokeOpacity="0.850">
          <rect x="331" y="559" width="352" height="35" />
          <ellipse cx="381.500" cy="1237" rx="57" ry="106" />
          <ellipse cx="1134.500" cy="840" rx="73.500" ry="42" />
          <ellipse cx="1119" cy="1105" rx="121" ry="107" />
          <ellipse cx="320.500" cy="1614" rx="105.500" ry="14.500" />
          <ellipse cx="1101" cy="1573" rx="73" ry="45" />
          <ellipse cx="1090" cy="1826" rx="134" ry="108" />
          <ellipse cx="71" cy="2289.500" rx="36" ry="21.500" />
          <ellipse cx="304" cy="2533" rx="43" ry="20" />
          <ellipse cx="625" cy="2547" rx="276" ry="26" />
        </g>
        <g stroke="#111" strokeWidth="1.900">
          <path d="M183 148L775 378M306 316L742 48M398 184L1064 836M333 220L1126 1555M986 1926L912.500 548M1126 1190V228" />
        </g>
        <g fill="#ff0000" stroke="#111" strokeWidth="1.500">
          <path d="M777 368L769 387L791 384.500ZM735 40L746 57L758 37ZM1056 843L1071 828L1078 850ZM1117 1560L1135.500 1549L1136 1571.500ZM903 548L922 547L912 528ZM1116 228.500H1136L1126 208Z" />
        </g>
      </svg>
    </div>
  );
}
